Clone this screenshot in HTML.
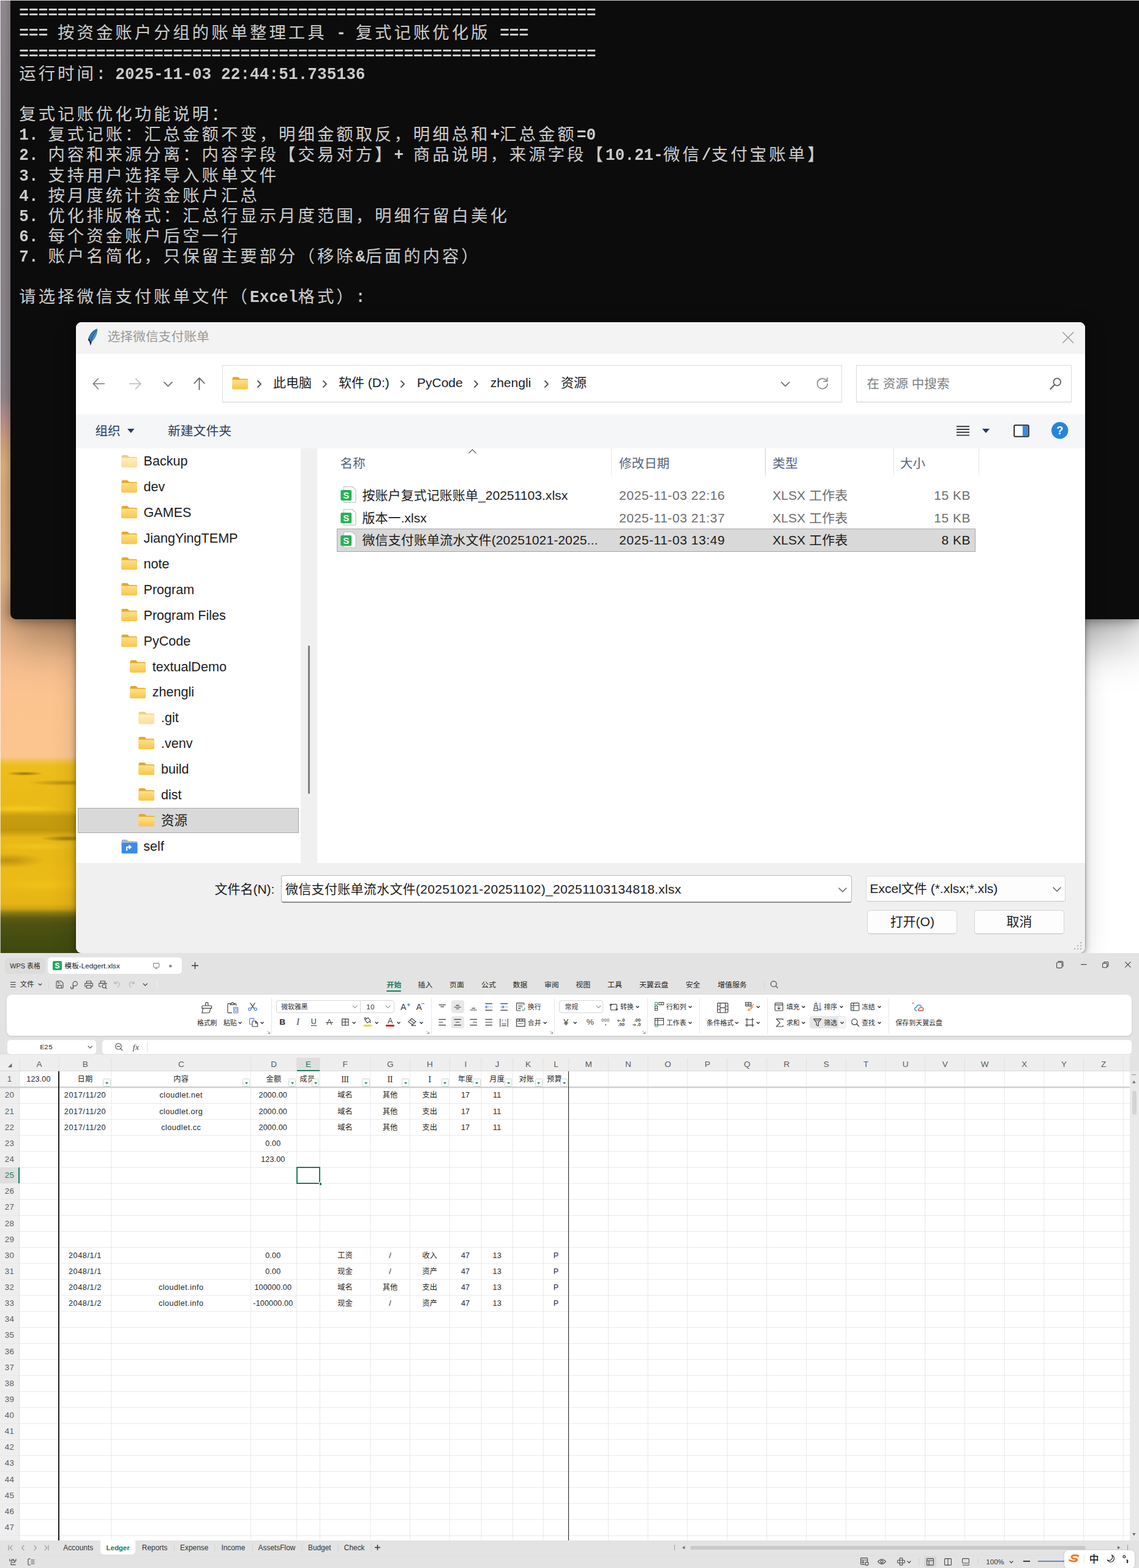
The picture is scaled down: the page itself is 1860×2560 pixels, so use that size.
<!DOCTYPE html>
<html lang="zh-CN"><head><meta charset="utf-8"><title>screenshot</title>
<style>
html,body{margin:0;padding:0;background:#fff;}
body{width:1860px;height:2560px;overflow:hidden;position:relative;font-family:"Liberation Sans","Noto Sans CJK SC",sans-serif;}
#root{position:absolute;left:0;top:0;width:1860px;height:2560px;overflow:hidden;background:#fff;}
.a{position:absolute;}
.t{position:absolute;white-space:pre;line-height:1;}
svg{position:absolute;overflow:visible;}
/* ---------- terminal ---------- */
#wall{background:
 radial-gradient(ellipse 30px 3.5px at 40px 1263px, rgba(110,80,0,.7), rgba(110,80,0,0) 100%),
 radial-gradient(ellipse 60px 5px at 105px 1278px, rgba(120,90,0,.45), rgba(120,90,0,0) 100%),
 radial-gradient(ellipse 70px 7px at 35px 1320px, rgba(255,225,40,.45), rgba(255,225,40,0) 100%),
 radial-gradient(ellipse 45px 5px at 110px 1369px, rgba(100,75,0,.6), rgba(100,75,0,0) 100%),
 radial-gradient(ellipse 60px 12px at 12px 1405px, rgba(120,92,0,.4), rgba(120,92,0,0) 100%),
 radial-gradient(ellipse 80px 7px at 60px 1382px, rgba(255,220,40,.35), rgba(255,220,40,0) 100%),
 radial-gradient(ellipse 80px 10px at 70px 1445px, rgba(255,215,30,.25), rgba(255,215,30,0) 100%),
 linear-gradient(to bottom, rgba(125,95,0,0) 1322px, rgba(125,95,0,.33) 1333px, rgba(125,95,0,.36) 1356px, rgba(125,95,0,0) 1368px),
 linear-gradient(to bottom, #c3bec6 0, #bab4bc 300px, #aca3aa 600px, #b39a9c 660px, #cf9a82 700px, #e6b578 745px, #e3ad78 800px, #e4ae80 900px, #f0b98c 1011px, #f8c190 1080px, #fbc48f 1150px, #fbc590 1235px, #f3c24e 1242px, #edbd1c 1250px, #eaba16 1300px, #e8b816 1400px, #ebbb16 1440px, #e4b416 1476px, #c9a216 1484px, #8c7c14 1490px, #5f5c14 1498px, #4e5212 1508px, #454d10 1530px, #3e480f 1556px);}
#wallR{background:#fff;}
#term{position:absolute;left:17px;top:0;width:1843px;height:1011px;background:#0c0c0c;border-bottom-left-radius:9px;box-shadow:0 0 20px 1px rgba(0,0,0,.45), 0 34px 80px 0 rgba(0,0,0,.36);}
.tl{position:absolute;left:31.3px;height:33.15px;line-height:33.15px;white-space:pre;color:#cccccc;font-family:"Liberation Mono","Noto Sans CJK SC",monospace;font-size:26px;letter-spacing:0.1px;font-weight:bold;}
.tl i{display:inline-block;font-style:normal;transform:scaleY(1.06);transform-origin:0 23.5px;}
.tl b{font-family:"Noto Sans CJK SC","Liberation Mono",monospace;font-weight:400;font-size:27.4px;letter-spacing:4px;line-height:0;position:relative;top:1.1px;}
/* ---------- dialog ---------- */
#dlg{border-radius:9px;box-shadow:0 0 0 1px rgba(0,0,0,.2), 0 2px 10px 1px rgba(0,0,0,.3), 0 10px 40px 0 rgba(0,0,0,.16);background:#f0f0f0;}
#strip{-webkit-mask-image:linear-gradient(to bottom,#000 0,#000 940px,rgba(0,0,0,0) 1003px);mask-image:linear-gradient(to bottom,#000 0,#000 940px,rgba(0,0,0,0) 1003px);background:
 linear-gradient(to right, rgba(0,0,0,0) 0, rgba(0,0,0,0) 7px, rgba(0,0,0,.13) 17px),
 linear-gradient(to bottom, #8e888e 0, #898388 300px, #878086 600px, #8f8185 650px, #b08a86 685px, #c89a76 720px, #d3aa76 760px, #d2a574 800px, #d6aa7a 900px, #dcb084 980px, #deb288 1003px);}

</style></head>
<body>
<div id="root">
<div id="wall" class="a" style="left:0;top:0;width:1860px;height:1556px;"></div>
<div id="wallR" class="a" style="left:1700px;top:1000px;width:160px;height:556px;"></div>
<div id="term"></div>
<div id="strip" class="a" style="left:0;top:0;width:17.3px;height:1003px;"></div>
<div class="a" style="left:0;top:0;width:1860px;height:1.3px;background:rgba(255,255,255,.82);"></div>
<div class="a" style="left:0;top:0;width:1.3px;height:1556px;background:rgba(255,255,255,.7);"></div>
<div class="tl" style="top:6.3px"><i>============================================================</i></div>
<div class="tl" style="top:39.4px"><i>=== </i><b>按资金账户分组的账单整理工具</b><i> - </i><b>复式记账优化版</b><i> ===</i></div>
<div class="tl" style="top:72.6px"><i>============================================================</i></div>
<div class="tl" style="top:105.7px"><b>运行时间</b><i>: 2025-11-03 22:44:51.735136</i></div>
<div class="tl" style="top:172.1px"><b>复式记账优化功能说明：</b></div>
<div class="tl" style="top:205.2px"><i>1. </i><b>复式记账：汇总金额不变，明细金额取反，明细总和</b><i>+</i><b>汇总金额</b><i>=0</i></div>
<div class="tl" style="top:238.3px"><i>2. </i><b>内容和来源分离：内容字段【交易对方】</b><i>+ </i><b>商品说明，来源字段【</b><i>10.21-</i><b>微信</b><i>/</i><b>支付宝账单】</b></div>
<div class="tl" style="top:271.5px"><i>3. </i><b>支持用户选择导入账单文件</b></div>
<div class="tl" style="top:304.6px"><i>4. </i><b>按月度统计资金账户汇总</b></div>
<div class="tl" style="top:337.8px"><i>5. </i><b>优化排版格式：汇总行显示月度范围，明细行留白美化</b></div>
<div class="tl" style="top:370.9px"><i>6. </i><b>每个资金账户后空一行</b></div>
<div class="tl" style="top:404.1px"><i>7. </i><b>账户名简化，只保留主要部分（移除</b><i>&amp;</i><b>后面的内容）</b></div>
<div class="tl" style="top:470.4px"><b>请选择微信支付账单文件（</b><i>Excel</i><b>格式）</b><i>:</i></div>
<svg width="0" height="0" style="left:0;top:0"><defs><linearGradient id="fg" x1="0" y1="0" x2="0" y2="1"><stop offset="0" stop-color="#ffe08a"/><stop offset="1" stop-color="#f7c64a"/></linearGradient></defs></svg>
<div id="dlg" class="a" style="left:124px;top:526px;width:1648px;height:1030px;">
</div>
<div class="a" style="left:124px;top:526px;width:1648px;height:52px;background:#f3f3f3;border-radius:9px 9px 0 0;"></div>
<div class="a" style="left:124px;top:577.5px;width:1648px;height:99px;background:#fff;"></div>
<div class="a" style="left:124px;top:676px;width:1648px;height:56px;background:#f5f6f8;"></div>
<div class="a" style="left:124px;top:732px;width:1648px;height:677px;background:#fff;"></div>
<div class="a" style="left:491px;top:732px;width:27px;height:677px;background:#f0f0f0;"></div>
<div class="a" style="left:124px;top:1408.6px;width:1648px;height:147.4px;background:#f0f0f0;border-radius:0 0 9px 9px;"></div>
<svg style="left:143px;top:536px;" width="17" height="29" viewBox="0 0 17 29"><path d="M15.8 0.6 C9 3 2 11 0.8 19 L3 21.5 L4.8 27.9 L7 22 C12 17 17 9 15.8 0.6 Z" fill="#3f7dbb"/><path d="M0.8 19 L3 21.5 L4.8 27.9 L6.6 22.6 C5 21.6 3.2 19.8 3 16.5 C2 17 1.2 18 0.8 19 Z" fill="#14284a"/><path d="M15.8 0.6 C9 3 2 11 0.8 19 C3 12 8 5.5 15.8 0.6 Z" fill="#244c84"/><path d="M14.4 3.2 C9.5 8.5 6.2 15.5 5 23.5" stroke="#1d3c6c" stroke-width="0.9" fill="none" opacity="0.75"/><path d="M15 4.5 C14.6 9.5 12 15 8.2 19.8 C10.4 14 12.8 9 15 4.5 Z" fill="#6fa9dc" opacity="0.8"/></svg>
<div class="t" style="top:535.3px;font-size:20.8px;line-height:30px;height:30px;color:#999;left:175.5px;">选择微信支付账单</div>
<svg style="left:1735.2px;top:542.2px;" width="18.4" height="18.4" viewBox="0 0 18.4 18.4"><path d="M0.3 0.3 L18.1 18.1 M18.1 0.3 L0.3 18.1" stroke="#9a9a9a" stroke-width="1.5" fill="none"/></svg>
<svg style="left:150.5px;top:616.8px;" width="20" height="19" viewBox="0 0 20 19"><path d="M19.3 9.5 L1.6 9.5 M9.3 1.2 L1.3 9.5 L9.3 17.8" stroke="#757575" stroke-width="1.6" fill="none" stroke-linecap="round" stroke-linejoin="round"/></svg>
<svg style="left:211px;top:616.8px;" width="20" height="19" viewBox="0 0 20 19"><path d="M0.7 9.5 L18.4 9.5 M10.7 1.2 L18.7 9.5 L10.7 17.8" stroke="#b9b9b9" stroke-width="1.6" fill="none" stroke-linecap="round" stroke-linejoin="round"/></svg>
<svg style="left:267.5px;top:623.75px;" width="13" height="6.5" viewBox="0 0 13 6.5"><path d="M0 0 L6.5 6.5 L13 0" fill="none" stroke="#7a7a7a" stroke-width="1.8" stroke-linecap="round" stroke-linejoin="round"/></svg>
<svg style="left:315.5px;top:616px;" width="19" height="21" viewBox="0 0 19 21"><path d="M9.5 20 L9.5 1.5 M1.2 9.8 L9.5 1.2 L17.8 9.8" stroke="#6b6b6b" stroke-width="1.8" fill="none" stroke-linecap="round" stroke-linejoin="round"/></svg>
<div class="a" style="left:363px;top:596px;width:1012.4px;height:61px;box-sizing:border-box;background:#fff;border:1.5px solid #dcdcdc;border-bottom-color:#cfcfcf;"></div>
<div class="a" style="left:1398px;top:596px;width:352px;height:61px;box-sizing:border-box;background:#fff;border:1.5px solid #dcdcdc;border-bottom-color:#cfcfcf;"></div>
<svg style="left:378px;top:613.5px;" width="28" height="23" viewBox="0 0 28 22"><g><path d="M1.5 3.2 Q1.5 1 3.7 1 L10 1 Q11.3 1 12.2 2 L14 4 L25 4 Q27 4 27 6 L27 9 L1.5 9 Z" fill="#e3a926"/><path d="M1 7.6 Q1 5.4 3.2 5.4 L24.8 5.4 Q27 5.4 27 7.6 L27 19 Q27 21.2 24.8 21.2 L3.2 21.2 Q1 21.2 1 19 Z" fill="url(#fg)"/></g></svg>
<div class="t" style="top:610.3px;font-size:21px;line-height:30px;height:30px;color:#1c1c1c;left:446px;">此电脑</div>
<div class="t" style="top:610.3px;font-size:21px;line-height:30px;height:30px;color:#1c1c1c;left:553px;">软件 (D:)</div>
<div class="t" style="top:610.3px;font-size:21px;line-height:30px;height:30px;color:#1c1c1c;left:681px;">PyCode</div>
<div class="t" style="top:610.3px;font-size:21px;line-height:30px;height:30px;color:#1c1c1c;left:800.7px;">zhengli</div>
<div class="t" style="top:610.3px;font-size:21px;line-height:30px;height:30px;color:#1c1c1c;left:916px;">资源</div>
<svg style="left:421.2px;top:621.5px;" width="5" height="10" viewBox="0 0 5 10"><path d="M0 0 L5 5 L0 10" fill="none" stroke="#555" stroke-width="1.9" stroke-linecap="round" stroke-linejoin="round"/></svg>
<svg style="left:527.5px;top:621.5px;" width="5" height="10" viewBox="0 0 5 10"><path d="M0 0 L5 5 L0 10" fill="none" stroke="#555" stroke-width="1.9" stroke-linecap="round" stroke-linejoin="round"/></svg>
<svg style="left:654.5px;top:621.5px;" width="5" height="10" viewBox="0 0 5 10"><path d="M0 0 L5 5 L0 10" fill="none" stroke="#555" stroke-width="1.9" stroke-linecap="round" stroke-linejoin="round"/></svg>
<svg style="left:775px;top:621.5px;" width="5" height="10" viewBox="0 0 5 10"><path d="M0 0 L5 5 L0 10" fill="none" stroke="#555" stroke-width="1.9" stroke-linecap="round" stroke-linejoin="round"/></svg>
<svg style="left:890px;top:621.5px;" width="5" height="10" viewBox="0 0 5 10"><path d="M0 0 L5 5 L0 10" fill="none" stroke="#555" stroke-width="1.9" stroke-linecap="round" stroke-linejoin="round"/></svg>
<svg style="left:1275.5px;top:623.75px;" width="13" height="6.5" viewBox="0 0 13 6.5"><path d="M0 0 L6.5 6.5 L13 0" fill="none" stroke="#7a7a7a" stroke-width="1.8" stroke-linecap="round" stroke-linejoin="round"/></svg>
<svg style="left:1333px;top:616px;" width="20" height="20" viewBox="0 0 20 20"><path d="M17.2 6.2 A8.3 8.3 0 1 0 18.3 10.6" stroke="#8a8a8a" stroke-width="1.7" fill="none" stroke-linecap="round"/><path d="M17.8 0.8 L17.8 6.6 L12 6.6" stroke="#8a8a8a" stroke-width="1.7" fill="none" stroke-linecap="round" stroke-linejoin="round"/></svg>
<div class="t" style="top:611.8px;font-size:20.6px;line-height:30px;height:30px;color:#7d7d7d;left:1415.5px;">在 资源 中搜索</div>
<svg style="left:1714px;top:615.5px;" width="20" height="21" viewBox="0 0 20 21"><circle cx="12.3" cy="7.7" r="5.9" stroke="#666" stroke-width="1.9" fill="none"/><path d="M8 12.2 L1.3 19.3" stroke="#666" stroke-width="2.2" stroke-linecap="round"/></svg>
<div class="t" style="top:688.6px;font-size:20.6px;line-height:30px;height:30px;color:#2a3c5a;left:155.5px;">组织</div>
<svg style="left:208.2px;top:700.2px;" width="11.5" height="7" viewBox="0 0 11.5 7"><path d="M0 0 L11.5 0 L5.75 7 Z" fill="#2a3c5a"/></svg>
<div class="t" style="top:688.6px;font-size:20.8px;line-height:30px;height:30px;color:#2a3c5a;left:274px;">新建文件夹</div>
<svg style="left:1561.5px;top:695px;" width="21" height="17" viewBox="0 0 21 17"><path d="M0 1.2 H21 M0 6 H21 M0 10.8 H21 M0 15.6 H21" stroke="#3a3a3a" stroke-width="1.9"/></svg>
<svg style="left:1603.5px;top:700.2px;" width="12" height="7" viewBox="0 0 12 7"><path d="M0 0 L12 0 L6 7 Z" fill="#233a63"/></svg>
<svg style="left:1655px;top:692.8px;" width="26" height="21" viewBox="0 0 26 21"><rect x="1.2" y="1.2" width="23.6" height="18.6" rx="1.5" fill="#fff" stroke="#2b2b2b" stroke-width="2"/><rect x="15" y="2.2" width="8.8" height="16.6" fill="#3c8ad8"/></svg>
<svg style="left:1716.8px;top:689.3px;" width="27.4" height="27.4" viewBox="0 0 27.4 27.4"><circle cx="13.7" cy="13.7" r="13.7" fill="#2585d9"/><text x="13.7" y="20.3" font-size="18" font-weight="bold" font-family="Liberation Sans, sans-serif" fill="#fff" text-anchor="middle">?</text></svg>
<svg style="left:196.5px;top:741.5px;" width="28" height="22" viewBox="0 0 28 22"><g opacity="0.55"><path d="M1.5 3.2 Q1.5 1 3.7 1 L10 1 Q11.3 1 12.2 2 L14 4 L25 4 Q27 4 27 6 L27 9 L1.5 9 Z" fill="#e3a926"/><path d="M1 7.6 Q1 5.4 3.2 5.4 L24.8 5.4 Q27 5.4 27 7.6 L27 19 Q27 21.2 24.8 21.2 L3.2 21.2 Q1 21.2 1 19 Z" fill="url(#fg)"/></g></svg>
<div class="t" style="top:738.3px;font-size:21.6px;line-height:30px;height:30px;color:#1c1c1c;left:234.5px;">Backup</div>
<svg style="left:196.5px;top:783.4px;" width="28" height="22" viewBox="0 0 28 22"><g><path d="M1.5 3.2 Q1.5 1 3.7 1 L10 1 Q11.3 1 12.2 2 L14 4 L25 4 Q27 4 27 6 L27 9 L1.5 9 Z" fill="#e3a926"/><path d="M1 7.6 Q1 5.4 3.2 5.4 L24.8 5.4 Q27 5.4 27 7.6 L27 19 Q27 21.2 24.8 21.2 L3.2 21.2 Q1 21.2 1 19 Z" fill="url(#fg)"/></g></svg>
<div class="t" style="top:780.2px;font-size:21.6px;line-height:30px;height:30px;color:#1c1c1c;left:234.5px;">dev</div>
<svg style="left:196.5px;top:825.3px;" width="28" height="22" viewBox="0 0 28 22"><g><path d="M1.5 3.2 Q1.5 1 3.7 1 L10 1 Q11.3 1 12.2 2 L14 4 L25 4 Q27 4 27 6 L27 9 L1.5 9 Z" fill="#e3a926"/><path d="M1 7.6 Q1 5.4 3.2 5.4 L24.8 5.4 Q27 5.4 27 7.6 L27 19 Q27 21.2 24.8 21.2 L3.2 21.2 Q1 21.2 1 19 Z" fill="url(#fg)"/></g></svg>
<div class="t" style="top:822.1px;font-size:21.6px;line-height:30px;height:30px;color:#1c1c1c;left:234.5px;">GAMES</div>
<svg style="left:196.5px;top:867.2px;" width="28" height="22" viewBox="0 0 28 22"><g><path d="M1.5 3.2 Q1.5 1 3.7 1 L10 1 Q11.3 1 12.2 2 L14 4 L25 4 Q27 4 27 6 L27 9 L1.5 9 Z" fill="#e3a926"/><path d="M1 7.6 Q1 5.4 3.2 5.4 L24.8 5.4 Q27 5.4 27 7.6 L27 19 Q27 21.2 24.8 21.2 L3.2 21.2 Q1 21.2 1 19 Z" fill="url(#fg)"/></g></svg>
<div class="t" style="top:864px;font-size:21.6px;line-height:30px;height:30px;color:#1c1c1c;left:234.5px;">JiangYingTEMP</div>
<svg style="left:196.5px;top:909.1px;" width="28" height="22" viewBox="0 0 28 22"><g><path d="M1.5 3.2 Q1.5 1 3.7 1 L10 1 Q11.3 1 12.2 2 L14 4 L25 4 Q27 4 27 6 L27 9 L1.5 9 Z" fill="#e3a926"/><path d="M1 7.6 Q1 5.4 3.2 5.4 L24.8 5.4 Q27 5.4 27 7.6 L27 19 Q27 21.2 24.8 21.2 L3.2 21.2 Q1 21.2 1 19 Z" fill="url(#fg)"/></g></svg>
<div class="t" style="top:905.9px;font-size:21.6px;line-height:30px;height:30px;color:#1c1c1c;left:234.5px;">note</div>
<svg style="left:196.5px;top:951px;" width="28" height="22" viewBox="0 0 28 22"><g><path d="M1.5 3.2 Q1.5 1 3.7 1 L10 1 Q11.3 1 12.2 2 L14 4 L25 4 Q27 4 27 6 L27 9 L1.5 9 Z" fill="#e3a926"/><path d="M1 7.6 Q1 5.4 3.2 5.4 L24.8 5.4 Q27 5.4 27 7.6 L27 19 Q27 21.2 24.8 21.2 L3.2 21.2 Q1 21.2 1 19 Z" fill="url(#fg)"/></g></svg>
<div class="t" style="top:947.8px;font-size:21.6px;line-height:30px;height:30px;color:#1c1c1c;left:234.5px;">Program</div>
<svg style="left:196.5px;top:992.9px;" width="28" height="22" viewBox="0 0 28 22"><g><path d="M1.5 3.2 Q1.5 1 3.7 1 L10 1 Q11.3 1 12.2 2 L14 4 L25 4 Q27 4 27 6 L27 9 L1.5 9 Z" fill="#e3a926"/><path d="M1 7.6 Q1 5.4 3.2 5.4 L24.8 5.4 Q27 5.4 27 7.6 L27 19 Q27 21.2 24.8 21.2 L3.2 21.2 Q1 21.2 1 19 Z" fill="url(#fg)"/></g></svg>
<div class="t" style="top:989.7px;font-size:21.6px;line-height:30px;height:30px;color:#1c1c1c;left:234.5px;">Program Files</div>
<svg style="left:196.5px;top:1034.8px;" width="28" height="22" viewBox="0 0 28 22"><g><path d="M1.5 3.2 Q1.5 1 3.7 1 L10 1 Q11.3 1 12.2 2 L14 4 L25 4 Q27 4 27 6 L27 9 L1.5 9 Z" fill="#e3a926"/><path d="M1 7.6 Q1 5.4 3.2 5.4 L24.8 5.4 Q27 5.4 27 7.6 L27 19 Q27 21.2 24.8 21.2 L3.2 21.2 Q1 21.2 1 19 Z" fill="url(#fg)"/></g></svg>
<div class="t" style="top:1031.6px;font-size:21.6px;line-height:30px;height:30px;color:#1c1c1c;left:234.5px;">PyCode</div>
<svg style="left:210.7px;top:1076.7px;" width="28" height="22" viewBox="0 0 28 22"><g><path d="M1.5 3.2 Q1.5 1 3.7 1 L10 1 Q11.3 1 12.2 2 L14 4 L25 4 Q27 4 27 6 L27 9 L1.5 9 Z" fill="#e3a926"/><path d="M1 7.6 Q1 5.4 3.2 5.4 L24.8 5.4 Q27 5.4 27 7.6 L27 19 Q27 21.2 24.8 21.2 L3.2 21.2 Q1 21.2 1 19 Z" fill="url(#fg)"/></g></svg>
<div class="t" style="top:1073.5px;font-size:21.6px;line-height:30px;height:30px;color:#1c1c1c;left:248.7px;">textualDemo</div>
<svg style="left:210.7px;top:1118.6px;" width="28" height="22" viewBox="0 0 28 22"><g><path d="M1.5 3.2 Q1.5 1 3.7 1 L10 1 Q11.3 1 12.2 2 L14 4 L25 4 Q27 4 27 6 L27 9 L1.5 9 Z" fill="#e3a926"/><path d="M1 7.6 Q1 5.4 3.2 5.4 L24.8 5.4 Q27 5.4 27 7.6 L27 19 Q27 21.2 24.8 21.2 L3.2 21.2 Q1 21.2 1 19 Z" fill="url(#fg)"/></g></svg>
<div class="t" style="top:1115.4px;font-size:21.6px;line-height:30px;height:30px;color:#1c1c1c;left:248.7px;">zhengli</div>
<svg style="left:224.9px;top:1160.5px;" width="28" height="22" viewBox="0 0 28 22"><g opacity="0.55"><path d="M1.5 3.2 Q1.5 1 3.7 1 L10 1 Q11.3 1 12.2 2 L14 4 L25 4 Q27 4 27 6 L27 9 L1.5 9 Z" fill="#e3a926"/><path d="M1 7.6 Q1 5.4 3.2 5.4 L24.8 5.4 Q27 5.4 27 7.6 L27 19 Q27 21.2 24.8 21.2 L3.2 21.2 Q1 21.2 1 19 Z" fill="url(#fg)"/></g></svg>
<div class="t" style="top:1157.3px;font-size:21.6px;line-height:30px;height:30px;color:#1c1c1c;left:262.9px;">.git</div>
<svg style="left:224.9px;top:1202.4px;" width="28" height="22" viewBox="0 0 28 22"><g><path d="M1.5 3.2 Q1.5 1 3.7 1 L10 1 Q11.3 1 12.2 2 L14 4 L25 4 Q27 4 27 6 L27 9 L1.5 9 Z" fill="#e3a926"/><path d="M1 7.6 Q1 5.4 3.2 5.4 L24.8 5.4 Q27 5.4 27 7.6 L27 19 Q27 21.2 24.8 21.2 L3.2 21.2 Q1 21.2 1 19 Z" fill="url(#fg)"/></g></svg>
<div class="t" style="top:1199.2px;font-size:21.6px;line-height:30px;height:30px;color:#1c1c1c;left:262.9px;">.venv</div>
<svg style="left:224.9px;top:1244.3px;" width="28" height="22" viewBox="0 0 28 22"><g><path d="M1.5 3.2 Q1.5 1 3.7 1 L10 1 Q11.3 1 12.2 2 L14 4 L25 4 Q27 4 27 6 L27 9 L1.5 9 Z" fill="#e3a926"/><path d="M1 7.6 Q1 5.4 3.2 5.4 L24.8 5.4 Q27 5.4 27 7.6 L27 19 Q27 21.2 24.8 21.2 L3.2 21.2 Q1 21.2 1 19 Z" fill="url(#fg)"/></g></svg>
<div class="t" style="top:1241.1px;font-size:21.6px;line-height:30px;height:30px;color:#1c1c1c;left:262.9px;">build</div>
<svg style="left:224.9px;top:1286.2px;" width="28" height="22" viewBox="0 0 28 22"><g><path d="M1.5 3.2 Q1.5 1 3.7 1 L10 1 Q11.3 1 12.2 2 L14 4 L25 4 Q27 4 27 6 L27 9 L1.5 9 Z" fill="#e3a926"/><path d="M1 7.6 Q1 5.4 3.2 5.4 L24.8 5.4 Q27 5.4 27 7.6 L27 19 Q27 21.2 24.8 21.2 L3.2 21.2 Q1 21.2 1 19 Z" fill="url(#fg)"/></g></svg>
<div class="t" style="top:1283px;font-size:21.6px;line-height:30px;height:30px;color:#1c1c1c;left:262.9px;">dist</div>
<div class="a" style="left:127.2px;top:1319.2px;width:361.2px;height:40.8px;box-sizing:border-box;background:#d9d9d9;border:1.3px solid #a9a9a9;"></div>
<svg style="left:224.9px;top:1328.1px;" width="28" height="22" viewBox="0 0 28 22"><g><path d="M1.5 3.2 Q1.5 1 3.7 1 L10 1 Q11.3 1 12.2 2 L14 4 L25 4 Q27 4 27 6 L27 9 L1.5 9 Z" fill="#e3a926"/><path d="M1 7.6 Q1 5.4 3.2 5.4 L24.8 5.4 Q27 5.4 27 7.6 L27 19 Q27 21.2 24.8 21.2 L3.2 21.2 Q1 21.2 1 19 Z" fill="url(#fg)"/></g></svg>
<div class="t" style="top:1324.9px;font-size:21.6px;line-height:30px;height:30px;color:#1c1c1c;left:262.9px;">资源</div>
<svg style="left:197.5px;top:1369.5px;" width="27" height="24" viewBox="0 0 27 24"><path d="M0.5 3 Q0.5 0.8 2.7 0.8 L9 0.8 L11.5 3.6 L24.3 3.6 Q26.5 3.6 26.5 5.8 L26.5 8 L0.5 8 Z" fill="#9fb4d8"/><rect x="0.5" y="6" width="26" height="17.5" rx="2" fill="#3b8bea"/><path d="M9 19 L9 13 L15.5 13 M12.3 10 L15.8 13 L12.3 16" stroke="#fff" stroke-width="2" fill="none"/></svg>
<div class="t" style="top:1366.8px;font-size:21.6px;line-height:30px;height:30px;color:#1c1c1c;left:234.3px;">self</div>
<div class="a" style="left:503.2px;top:1053.6px;width:2.4px;height:242.6px;background:#7f7f7f;border-radius:1.2px;"></div>
<div class="t" style="top:741.6px;font-size:20.6px;line-height:30px;height:30px;color:#55657e;left:555.4px;">名称</div>
<div class="t" style="top:741.6px;font-size:20.6px;line-height:30px;height:30px;color:#55657e;left:1011px;">修改日期</div>
<div class="t" style="top:741.6px;font-size:20.6px;line-height:30px;height:30px;color:#55657e;left:1261.6px;">类型</div>
<div class="t" style="top:741.6px;font-size:20.6px;line-height:30px;height:30px;color:#55657e;left:1470px;">大小</div>
<svg style="left:766.3px;top:734.45px;" width="11" height="5.5" viewBox="0 0 11 5.5"><path d="M0 5.5 L5.5 0 L11 5.5" fill="none" stroke="#777" stroke-width="1.6" stroke-linecap="round" stroke-linejoin="round"/></svg>
<div class="a" style="left:998.2px;top:732px;width:1.2px;height:49px;background:linear-gradient(to bottom,#e4e4e4 0,#e4e4e4 80%,rgba(228,228,228,0));"></div>
<div class="a" style="left:1249.4px;top:732px;width:1.2px;height:49px;background:linear-gradient(to bottom,#e4e4e4 0,#e4e4e4 80%,rgba(228,228,228,0));"></div>
<div class="a" style="left:1459.1px;top:732px;width:1.2px;height:49px;background:linear-gradient(to bottom,#e4e4e4 0,#e4e4e4 80%,rgba(228,228,228,0));"></div>
<div class="a" style="left:1597.8px;top:732px;width:1.2px;height:49px;background:linear-gradient(to bottom,#e4e4e4 0,#e4e4e4 80%,rgba(228,228,228,0));"></div>
<svg style="left:555.8px;top:794px;" width="26" height="27" viewBox="0 0 26 27"><path d="M5.5 0.7 L19.5 0.7 L25 6 L25 24 Q25 26.3 22.7 26.3 L5.5 26.3 Z" fill="#fff" stroke="#c4c4c4" stroke-width="1.2"/><rect x="0.3" y="6" width="17.8" height="17.2" rx="2.2" fill="#22b455"/><text x="9.2" y="20" font-size="15" font-weight="bold" font-family="Liberation Sans, sans-serif" fill="#fff" text-anchor="middle">S</text></svg>
<div class="t" style="top:793.8px;font-size:21px;line-height:30px;height:30px;color:#1c1c1c;left:591.5px;letter-spacing:0.05px;">按账户复式记账账单_20251103.xlsx</div>
<div class="t" style="top:793.8px;font-size:21px;line-height:30px;height:30px;color:#6d6d6d;left:1011px;letter-spacing:0.55px;">2025-11-03 22:16</div>
<div class="t" style="top:793.8px;font-size:21px;line-height:30px;height:30px;color:#6d6d6d;left:1261.6px;">XLSX 工作表</div>
<div class="t" style="top:793.8px;font-size:21px;line-height:30px;height:30px;color:#6d6d6d;left:1465px;width:120px;text-align:right;letter-spacing:0.5px;">15 KB</div>
<svg style="left:555.8px;top:830.7px;" width="26" height="27" viewBox="0 0 26 27"><path d="M5.5 0.7 L19.5 0.7 L25 6 L25 24 Q25 26.3 22.7 26.3 L5.5 26.3 Z" fill="#fff" stroke="#c4c4c4" stroke-width="1.2"/><rect x="0.3" y="6" width="17.8" height="17.2" rx="2.2" fill="#22b455"/><text x="9.2" y="20" font-size="15" font-weight="bold" font-family="Liberation Sans, sans-serif" fill="#fff" text-anchor="middle">S</text></svg>
<div class="t" style="top:830.5px;font-size:21px;line-height:30px;height:30px;color:#1c1c1c;left:591.5px;letter-spacing:0.05px;">版本一.xlsx</div>
<div class="t" style="top:830.5px;font-size:21px;line-height:30px;height:30px;color:#6d6d6d;left:1011px;letter-spacing:0.55px;">2025-11-03 21:37</div>
<div class="t" style="top:830.5px;font-size:21px;line-height:30px;height:30px;color:#6d6d6d;left:1261.6px;">XLSX 工作表</div>
<div class="t" style="top:830.5px;font-size:21px;line-height:30px;height:30px;color:#6d6d6d;left:1465px;width:120px;text-align:right;letter-spacing:0.5px;">15 KB</div>
<div class="a" style="left:549.5px;top:863.4px;width:1043.5px;height:37.8px;box-sizing:border-box;background:#d9d9d9;border:1.3px solid #a6a6a6;"></div>
<svg style="left:555.8px;top:867.6px;" width="26" height="27" viewBox="0 0 26 27"><path d="M5.5 0.7 L19.5 0.7 L25 6 L25 24 Q25 26.3 22.7 26.3 L5.5 26.3 Z" fill="#fff" stroke="#c4c4c4" stroke-width="1.2"/><rect x="0.3" y="6" width="17.8" height="17.2" rx="2.2" fill="#22b455"/><text x="9.2" y="20" font-size="15" font-weight="bold" font-family="Liberation Sans, sans-serif" fill="#fff" text-anchor="middle">S</text></svg>
<div class="t" style="top:867.4px;font-size:21px;line-height:30px;height:30px;color:#1c1c1c;left:591.5px;letter-spacing:0.12px;">微信支付账单流水文件(20251021-2025...</div>
<div class="t" style="top:867.4px;font-size:21px;line-height:30px;height:30px;color:#1c1c1c;left:1011px;letter-spacing:0.55px;">2025-11-03 13:49</div>
<div class="t" style="top:867.4px;font-size:21px;line-height:30px;height:30px;color:#1c1c1c;left:1261.6px;">XLSX 工作表</div>
<div class="t" style="top:867.4px;font-size:21px;line-height:30px;height:30px;color:#1c1c1c;left:1465px;width:120px;text-align:right;letter-spacing:0.5px;">8 KB</div>
<div class="t" style="top:1437.3px;font-size:21px;line-height:30px;height:30px;color:#1c1c1c;left:350.4px;">文件名(N):</div>
<div class="a" style="left:458.5px;top:1429px;width:932.5px;height:44.5px;box-sizing:border-box;background:#fff;border:1.5px solid #b9b9b9;border-bottom:2px solid #8c8c8c;border-radius:4px;"></div>
<div class="t" style="top:1437.3px;font-size:21px;line-height:30px;height:30px;color:#1c1c1c;left:466px;letter-spacing:0.3px;">微信支付账单流水文件(20251021-20251102)_20251103134818.xlsx</div>
<svg style="left:1369.5px;top:1449.6px;" width="12" height="6" viewBox="0 0 12 6"><path d="M0 0 L6 6 L12 0" fill="none" stroke="#666" stroke-width="1.6" stroke-linecap="round" stroke-linejoin="round"/></svg>
<div class="a" style="left:1413.8px;top:1430px;width:326.4px;height:41.5px;box-sizing:border-box;background:#fdfdfd;border:1.3px solid #d9d9d9;border-bottom-color:#c4c4c4;border-radius:4px;"></div>
<div class="t" style="top:1436.2px;font-size:21px;line-height:30px;height:30px;color:#1c1c1c;left:1420.5px;">Excel文件 (*.xlsx;*.xls)</div>
<svg style="left:1719.5px;top:1448.6px;" width="12" height="6" viewBox="0 0 12 6"><path d="M0 0 L6 6 L12 0" fill="none" stroke="#666" stroke-width="1.6" stroke-linecap="round" stroke-linejoin="round"/></svg>
<div class="a" style="left:1416.2px;top:1486px;width:147.2px;height:38.6px;box-sizing:border-box;background:#fdfdfd;border:1.3px solid #d6d6d6;border-bottom-color:#bdbdbd;border-radius:5px;"></div>
<div class="t" style="top:1490.2px;font-size:21px;line-height:30px;height:30px;color:#1c1c1c;left:1419.8px;width:140px;text-align:center;">打开(O)</div>
<div class="a" style="left:1590.5px;top:1486px;width:147.8px;height:38.6px;box-sizing:border-box;background:#fdfdfd;border:1.3px solid #d6d6d6;border-bottom-color:#bdbdbd;border-radius:5px;"></div>
<div class="t" style="top:1490.2px;font-size:21px;line-height:30px;height:30px;color:#1c1c1c;left:1594.4px;width:140px;text-align:center;">取消</div>
<svg style="left:1754px;top:1537.5px;" width="13" height="13" viewBox="0 0 13 13"><rect x="10" y="0" width="2.2" height="2.2" fill="#b5b5b5"/><rect x="5" y="5" width="2.2" height="2.2" fill="#b5b5b5"/><rect x="10" y="5" width="2.2" height="2.2" fill="#b5b5b5"/><rect x="0" y="10" width="2.2" height="2.2" fill="#b5b5b5"/><rect x="5" y="10" width="2.2" height="2.2" fill="#b5b5b5"/><rect x="10" y="10" width="2.2" height="2.2" fill="#b5b5b5"/></svg>
<div id="wps" class="a" style="left:0;top:1556px;width:1860px;height:1004px;background:#e3e3e3;"></div>
<div class="a" style="left:8px;top:1563.6px;width:66px;height:26px;background:#dcdcdc;border-radius:6px;"></div>
<div class="t" style="top:1567.7px;font-size:10.9px;line-height:18px;height:18px;color:#2b2b2b;left:8px;width:66px;text-align:center;">WPS 表格</div>
<div class="a" style="left:78.4px;top:1563.2px;width:218.2px;height:26.4px;background:#fff;border-radius:6px;"></div>
<svg style="left:85.6px;top:1569.3px;" width="15" height="15" viewBox="0 0 15 15"><rect x="0" y="0" width="15" height="15" rx="2.2" fill="#1eaa61"/><text x="7.5" y="12" font-size="12" font-weight="bold" font-family="Liberation Sans, sans-serif" fill="#fff" text-anchor="middle">S</text></svg>
<div class="t" style="top:1567.7px;font-size:11.6px;line-height:18px;height:18px;color:#222;left:105.5px;letter-spacing:0.05px;">模板-Ledgert.xlsx</div>
<svg style="left:250.2px;top:1571.8px;" width="10.5" height="10" viewBox="0 0 10.5 10"><rect x="0.6" y="0.6" width="9.3" height="6.6" rx="1.2" fill="none" stroke="#8a8a8a" stroke-width="1.1"/><path d="M3.2 9.4 H7.3 M5.25 7.4 V9.4" stroke="#8a8a8a" stroke-width="1.1"/></svg>
<svg style="left:276px;top:1574.5px;" width="4.6" height="4.6" viewBox="0 0 4.6 4.6"><circle cx="2.3" cy="2.3" r="2.3" fill="#8a8a8a"/></svg>
<svg style="left:312.5px;top:1571px;" width="11" height="11" viewBox="0 0 11 11"><path d="M5.5 0 V11 M0 5.5 H11" stroke="#333" stroke-width="1.3"/></svg>
<svg style="left:1725px;top:1569.2px;" width="11.5" height="12" viewBox="0 0 11.5 12"><rect x="0.6" y="2.2" width="8.6" height="9.2" rx="1.6" fill="none" stroke="#444" stroke-width="1.1"/><path d="M2.6 0.6 H9 Q10.9 0.6 10.9 2.5 V9.6" fill="none" stroke="#444" stroke-width="1.1"/></svg>
<svg style="left:1764.5px;top:1574.4px;" width="9.5" height="1.2" viewBox="0 0 9.5 1.2"><rect width="9.5" height="1.2" fill="#444"/></svg>
<svg style="left:1800.3px;top:1570px;" width="10.4" height="10.4" viewBox="0 0 10.4 10.4"><rect x="0.55" y="2.6" width="7.2" height="7.2" rx="1" fill="none" stroke="#444" stroke-width="1.1"/><path d="M2.8 2.4 V1.6 Q2.8 0.55 3.8 0.55 H8.8 Q9.85 0.55 9.85 1.6 V6.6 Q9.85 7.6 8.8 7.6 H8" fill="none" stroke="#444" stroke-width="1.1"/></svg>
<svg style="left:1836.6px;top:1570.2px;" width="9.8" height="9.8" viewBox="0 0 9.8 9.8"><path d="M0.4 0.4 L9.4 9.4 M9.4 0.4 L0.4 9.4" stroke="#444" stroke-width="1.15"/></svg>
<svg style="left:17.3px;top:1602.9px;" width="8.6" height="9" viewBox="0 0 8.6 9"><path d="M0 0.8 H8.6 M0 4.5 H8.6 M0 8.2 H8.6" fill="none" stroke="#333" stroke-width="1.1" /></svg>
<div class="t" style="top:1599.4px;font-size:11.4px;line-height:16px;height:16px;color:#222;left:32.8px;">文件</div>
<svg style="left:62.5px;top:1606.45px;" width="5" height="2.5" viewBox="0 0 5 2.5"><path d="M0 0 L2.5 2.5 L5 0" fill="none" stroke="#444" stroke-width="1.1" stroke-linecap="round" stroke-linejoin="round"/></svg>
<div class="a" style="left:79px;top:1600.5px;width:1px;height:14px;background:#d9d9d9;"></div>
<svg style="left:91.3px;top:1600.9px;" width="13" height="13" viewBox="0 0 13 13"><path d="M1 2.2 Q1 0.8 2.4 0.8 H8.6 L12 4.2 V10.8 Q12 12.2 10.6 12.2 H2.4 Q1 12.2 1 10.8 Z M3.6 12 V7.6 H9.4 V12 M3.8 1 V4 H7.6" fill="none" stroke="#4a4a4a" stroke-width="1.1" /></svg>
<svg style="left:114.7px;top:1600.9px;" width="13" height="13" viewBox="0 0 13 13"><path d="M4.2 12 V5.2 M4.2 5.2 A3.6 3.6 0 1 1 8 8.6 H4.4 M1.2 9.6 A2.2 2.2 0 1 0 4.2 9.6" fill="none" stroke="#4a4a4a" stroke-width="1.1" /></svg>
<svg style="left:137.6px;top:1600.9px;" width="14" height="13" viewBox="0 0 14 13"><path d="M3.4 4.4 V0.8 H10.6 V4.4 M3.4 9.8 H1.6 Q0.7 9.8 0.7 8.9 V5.3 Q0.7 4.4 1.6 4.4 H12.4 Q13.3 4.4 13.3 5.3 V8.9 Q13.3 9.8 12.4 9.8 H10.6 M3.4 7.6 H10.6 V12.2 H3.4 Z" fill="none" stroke="#4a4a4a" stroke-width="1.1" /></svg>
<svg style="left:160.75px;top:1600.65px;" width="14.5" height="13.5" viewBox="0 0 14.5 13.5"><path d="M3.2 4.4 V0.8 H10.4 V4.4 M4 9.8 H1.6 Q0.7 9.8 0.7 8.9 V5.3 Q0.7 4.4 1.6 4.4 H12.2 Q13.1 4.4 13.1 5.3 V6" fill="none" stroke="#4a4a4a" stroke-width="1.1" /><circle cx="9" cy="9" r="3" fill="none" stroke="#4a4a4a" stroke-width="1.1"/><path d="M11.2 11.2 L13.6 13.4" fill="none" stroke="#4a4a4a" stroke-width="1.2" /></svg>
<svg style="left:185.5px;top:1601.4px;" width="10" height="12" viewBox="0 0 10 12"><path d="M1 1 V5 H5 M1.4 4.8 Q5 0.6 8 3.4 Q10.4 6.4 6 11.4" fill="none" stroke="#b4b4b4" stroke-width="1.1" /></svg>
<svg style="left:209.5px;top:1601.4px;" width="10" height="12" viewBox="0 0 10 12"><path d="M9 1 V5 H5 M8.6 4.8 Q5 0.6 2 3.4 Q-0.4 6.4 4 11.4" fill="none" stroke="#b4b4b4" stroke-width="1.1" /></svg>
<svg style="left:234.4px;top:1606.2px;" width="6.4" height="3.2" viewBox="0 0 6.4 3.2"><path d="M0 0 L3.2 3.2 L6.4 0" fill="none" stroke="#444" stroke-width="1.2" stroke-linecap="round" stroke-linejoin="round"/></svg>
<div class="a" style="left:256.4px;top:1600.5px;width:1px;height:14px;background:#efefef;"></div>
<div class="t" style="top:1599.6px;font-size:11.9px;line-height:16px;height:16px;color:#1f7a5c;left:603.4px;width:80px;text-align:center;font-weight:bold;">开始</div>
<div class="a" style="left:631.4px;top:1617.3px;width:24px;height:2px;background:#1f7a5c;border-radius:1px;"></div>
<div class="t" style="top:1599.6px;font-size:11.9px;line-height:16px;height:16px;color:#222;left:654.4px;width:80px;text-align:center;">插入</div>
<div class="t" style="top:1599.6px;font-size:11.9px;line-height:16px;height:16px;color:#222;left:706px;width:80px;text-align:center;">页面</div>
<div class="t" style="top:1599.6px;font-size:11.9px;line-height:16px;height:16px;color:#222;left:758px;width:80px;text-align:center;">公式</div>
<div class="t" style="top:1599.6px;font-size:11.9px;line-height:16px;height:16px;color:#222;left:809.3px;width:80px;text-align:center;">数据</div>
<div class="t" style="top:1599.6px;font-size:11.9px;line-height:16px;height:16px;color:#222;left:860.8px;width:80px;text-align:center;">审阅</div>
<div class="t" style="top:1599.6px;font-size:11.9px;line-height:16px;height:16px;color:#222;left:912.2px;width:80px;text-align:center;">视图</div>
<div class="t" style="top:1599.6px;font-size:11.9px;line-height:16px;height:16px;color:#222;left:964px;width:80px;text-align:center;">工具</div>
<div class="t" style="top:1599.6px;font-size:11.9px;line-height:16px;height:16px;color:#222;left:1027.7px;width:80px;text-align:center;">天翼云盘</div>
<div class="t" style="top:1599.6px;font-size:11.9px;line-height:16px;height:16px;color:#222;left:1091.6px;width:80px;text-align:center;">安全</div>
<div class="t" style="top:1599.6px;font-size:11.9px;line-height:16px;height:16px;color:#222;left:1155.7px;width:80px;text-align:center;">增值服务</div>
<div class="a" style="left:1248.2px;top:1600.5px;width:1px;height:14px;background:#d6d6d6;"></div>
<svg style="left:1257.9px;top:1600.9px;" width="13" height="13" viewBox="0 0 13 13"><circle cx="5.4" cy="5.4" r="4.6" fill="none" stroke="#444" stroke-width="1.15"/><path d="M8.8 8.8 L12.4 12.4" fill="none" stroke="#444" stroke-width="1.2" /></svg>
<div class="a" style="left:11.4px;top:1623.7px;width:1837.1px;height:67.3px;background:#fff;border-radius:8px;box-shadow:0 1px 3px rgba(0,0,0,.13);"></div>
<svg style="left:328.85px;top:1635.9px;" width="17.5" height="18.6" viewBox="0 0 17.5 18.6"><path d="M6.6 6 V2.6 Q6.6 0.6 8.7 0.6 Q10.8 0.6 10.8 2.6 V6 M2.2 6 H15.3 Q16.6 6 16.6 7.3 V10.2 H0.9 V7.3 Q0.9 6 2.2 6 Z M2.6 10.4 L0.9 17.8 H11 Q13.8 17.4 13.6 14.4 M13.6 14.6 L14.8 10.4" fill="none" stroke="#3d3d3d" stroke-width="1.15" /></svg>
<div class="t" style="top:1661.6px;font-size:10.85px;line-height:16px;height:16px;color:#2b2b2b;left:321.9px;">格式刷</div>
<svg style="left:370.5px;top:1635.7px;" width="18.6" height="18.6" viewBox="0 0 18.6 18.6"><path d="M5.2 2.6 H2 Q0.8 2.6 0.8 3.8 V16.4 Q0.8 17.6 2 17.6 H8 M5.4 4.4 V2.4 H7 Q7.2 0.6 8.6 0.6 Q10 0.6 10.2 2.4 H11.8 V4.4 Z M12 2.6 H13.4 Q14.6 2.6 14.6 3.8 V6" fill="none" stroke="#3d3d3d" stroke-width="1.15" /><path d="M10.6 8.6 H17.6 V17.8 H10.6 Z M12.6 10.4 H15.8 V15.8 H12.6 Z" fill="none" stroke="#5a78c8" stroke-width="1" /></svg>
<div class="t" style="top:1661.6px;font-size:10.85px;line-height:16px;height:16px;color:#2b2b2b;left:364.8px;">粘贴</div>
<svg style="left:389.5px;top:1668.85px;" width="4.2" height="2.1" viewBox="0 0 4.2 2.1"><path d="M0 0 L2.1 2.1 L4.2 0" fill="none" stroke="#2b2b2b" stroke-width="1.35" stroke-linecap="round" stroke-linejoin="round"/></svg>
<svg style="left:405.1px;top:1636.7px;" width="15" height="13.4" viewBox="0 0 15 13.4"><path d="M3.6 0.4 L10 9.6 M11.4 0.4 L5 9.6" fill="none" stroke="#3d3d3d" stroke-width="1.15" /><circle cx="2.7" cy="10.6" r="2.1" fill="none" stroke="#4a74d9" stroke-width="1.1"/><circle cx="12.3" cy="10.6" r="2.1" fill="none" stroke="#4a74d9" stroke-width="1.1"/></svg>
<svg style="left:406.8px;top:1661.9px;" width="14.6" height="14.6" viewBox="0 0 14.6 14.6"><path d="M4.4 10.2 H1.6 Q0.6 10.2 0.6 9.2 V1.6 Q0.6 0.6 1.6 0.6 H6.6 Q7.6 0.6 7.6 1.6 V3.4" fill="none" stroke="#5a78c8" stroke-width="1.1" /><path d="M6 5 H10.6 L13.8 8.2 V13 Q13.8 14 12.8 14 H6 Q5 14 5 13 V6 Q5 5 6 5 Z M10.4 5.2 V8.4 H13.6" fill="none" stroke="#3d3d3d" stroke-width="1.1" /></svg>
<svg style="left:425.9px;top:1668.85px;" width="4.2" height="2.1" viewBox="0 0 4.2 2.1"><path d="M0 0 L2.1 2.1 L4.2 0" fill="none" stroke="#2b2b2b" stroke-width="1.35" stroke-linecap="round" stroke-linejoin="round"/></svg>
<svg style="left:435.8px;top:1683.2px;" width="5" height="5" viewBox="0 0 5 5"><path d="M0.4 0.4 L4.4 4.4 M4.6 1.4 V4.6 H1.4" fill="none" stroke="#8c8c8c" stroke-width="0.9" /></svg>
<div class="a" style="left:443px;top:1630px;width:1px;height:57.5px;background:#e6e6e6;"></div>
<div class="a" style="left:450.5px;top:1633.3px;width:193px;height:21px;box-sizing:border-box;border:1px solid #d6d6d6;border-radius:4px;background:#fff;"></div>
<div class="a" style="left:588.2px;top:1633.8px;width:1px;height:20px;background:#d6d6d6;"></div>
<div class="t" style="top:1636px;font-size:10.9px;line-height:16px;height:16px;color:#333;left:459.2px;">微软雅黑</div>
<svg style="left:576.3px;top:1642.45px;" width="7" height="3.5" viewBox="0 0 7 3.5"><path d="M0 0 L3.5 3.5 L7 0" fill="none" stroke="#777" stroke-width="1.05" stroke-linecap="round" stroke-linejoin="round"/></svg>
<div class="t" style="top:1636.1px;font-size:11.6px;line-height:16px;height:16px;color:#333;left:598.2px;letter-spacing:0.3px;">10</div>
<svg style="left:630.1px;top:1642.45px;" width="7" height="3.5" viewBox="0 0 7 3.5"><path d="M0 0 L3.5 3.5 L7 0" fill="none" stroke="#777" stroke-width="1.05" stroke-linecap="round" stroke-linejoin="round"/></svg>
<div class="t" style="top:1634.8px;font-size:14.2px;line-height:18px;height:18px;color:#3a3a3a;left:654px;">A</div>
<svg style="left:664.5px;top:1637.5px;" width="5" height="5" viewBox="0 0 5 5"><path d="M2.5 0 V5 M0 2.5 H5" fill="none" stroke="#3c6fcf" stroke-width="1" /></svg>
<div class="t" style="top:1634.8px;font-size:14.2px;line-height:18px;height:18px;color:#3a3a3a;left:679.4px;">A</div>
<svg style="left:687.9px;top:1637.85px;" width="5" height="1.1" viewBox="0 0 5 1.1"><rect width="5" height="1.1" fill="#7b6fd0"/></svg>
<div class="t" style="top:1659.9px;font-size:13.6px;line-height:18px;height:18px;color:#2e2e2e;left:451.2px;width:20px;text-align:center;font-weight:bold;">B</div>
<div class="t" style="top:1659.9px;font-size:13.6px;line-height:18px;height:18px;color:#3a3a3a;left:476.4px;width:20px;text-align:center;font-family:'Liberation Serif',serif;font-style:italic;">I</div>
<div class="t" style="top:1659.4px;font-size:12.4px;line-height:18px;height:18px;color:#3a3a3a;left:502.2px;width:20px;text-align:center;">U</div>
<div class="a" style="left:507.8px;top:1674.2px;width:8.8px;height:1.1px;background:#3a3a3a;"></div>
<div class="t" style="top:1660px;font-size:12.8px;line-height:18px;height:18px;color:#3a3a3a;left:527.7px;width:20px;text-align:center;">A</div>
<div class="a" style="left:531.8px;top:1669.3px;width:11.8px;height:1.1px;background:#3a3a3a;"></div>
<svg style="left:558.4px;top:1663px;" width="11.6" height="11.6" viewBox="0 0 11.6 11.6"><path d="M0.6 0.6 H11 V11 H0.6 Z M5.8 0.6 V11 M0.6 5.8 H11" fill="none" stroke="#3d3d3d" stroke-width="1.15" /></svg>
<svg style="left:576.3px;top:1668.85px;" width="4.2" height="2.1" viewBox="0 0 4.2 2.1"><path d="M0 0 L2.1 2.1 L4.2 0" fill="none" stroke="#2b2b2b" stroke-width="1.35" stroke-linecap="round" stroke-linejoin="round"/></svg>
<svg style="left:594.4px;top:1661.4px;" width="12" height="9.6" viewBox="0 0 12 9.6"><path d="M4.4 2.4 L7 0.5 L11 5.6 L6 9 L2 4.2 Z M2.6 3.2 Q0.2 1.6 2 0.6 Q3.4 0.2 4.6 2.4" fill="none" stroke="#3d3d3d" stroke-width="1.1" /><path d="M10.6 6.6 Q11.8 8 11 9.2 Q10 9.4 9.8 8.2 Z" fill="#333"/></svg>
<div class="a" style="left:593.8px;top:1672.7px;width:13.6px;height:3.2px;background:#f3f02c;border:0.6px solid #d8d420;box-sizing:border-box;border-radius:0.8px;"></div>
<svg style="left:612.6px;top:1668.85px;" width="4.2" height="2.1" viewBox="0 0 4.2 2.1"><path d="M0 0 L2.1 2.1 L4.2 0" fill="none" stroke="#2b2b2b" stroke-width="1.35" stroke-linecap="round" stroke-linejoin="round"/></svg>
<div class="t" style="top:1658.8px;font-size:12.6px;line-height:16px;height:16px;color:#3a3a3a;left:627.1px;width:20px;text-align:center;">A</div>
<div class="a" style="left:629.9px;top:1672.7px;width:14px;height:3.2px;background:#d11a1a;border-radius:1px;"></div>
<svg style="left:649px;top:1668.85px;" width="4.2" height="2.1" viewBox="0 0 4.2 2.1"><path d="M0 0 L2.1 2.1 L4.2 0" fill="none" stroke="#2b2b2b" stroke-width="1.35" stroke-linecap="round" stroke-linejoin="round"/></svg>
<svg style="left:665.6px;top:1662.1px;" width="14" height="13" viewBox="0 0 14 13"><path d="M6.4 0.8 L13 6 L7.4 11 L0.8 6.2 Z M3.8 3.6 L10.4 8.4 M5.4 12.4 H13.2" fill="none" stroke="#3d3d3d" stroke-width="1.1" /></svg>
<svg style="left:685.6px;top:1668.85px;" width="4.2" height="2.1" viewBox="0 0 4.2 2.1"><path d="M0 0 L2.1 2.1 L4.2 0" fill="none" stroke="#2b2b2b" stroke-width="1.35" stroke-linecap="round" stroke-linejoin="round"/></svg>
<svg style="left:696.2px;top:1683.2px;" width="5" height="5" viewBox="0 0 5 5"><path d="M0.4 0.4 L4.4 4.4 M4.6 1.4 V4.6 H1.4" fill="none" stroke="#8c8c8c" stroke-width="0.9" /></svg>
<div class="a" style="left:703.9px;top:1630px;width:1px;height:57.5px;background:#e6e6e6;"></div>
<div class="a" style="left:736.7px;top:1633.3px;width:21.7px;height:20.6px;background:#e8e8e8;border-radius:4px;"></div>
<div class="a" style="left:736.7px;top:1658.9px;width:21.7px;height:20.6px;background:#e8e8e8;border-radius:4px;"></div>
<svg style="left:715.5px;top:1638px;" width="12.4" height="12" viewBox="0 0 12.4 12"><path d="M0.6 2.6 H11.8 M3.4 5.6 H9" fill="none" stroke="#3d3d3d" stroke-width="1.15" /></svg>
<svg style="left:741.2px;top:1638px;" width="12.4" height="12" viewBox="0 0 12.4 12"><path d="M3.4 3.4 H9 M0.6 6.2 H11.8 M3.4 9 H9" fill="none" stroke="#3d3d3d" stroke-width="1.15" /></svg>
<svg style="left:766.7px;top:1638px;" width="12.4" height="12" viewBox="0 0 12.4 12"><path d="M3.4 8.2 H9 M0.6 11 H11.8" fill="none" stroke="#3d3d3d" stroke-width="1.15" /></svg>
<svg style="left:791.7px;top:1638px;" width="12.4" height="12" viewBox="0 0 12.4 12"><path d="M0.4 0.6 H12 M0.4 11.4 H12" fill="none" stroke="#3d3d3d" stroke-width="1.1" /><path d="M0.8 6 H6.4 M3.2 3.6 L0.8 6 L3.2 8.4 M8 6 H9.6 M10.8 6 H12" fill="none" stroke="#4a74d9" stroke-width="1.1" /></svg>
<svg style="left:817.1px;top:1638px;" width="12.4" height="12" viewBox="0 0 12.4 12"><path d="M0.4 0.6 H12 M0.4 11.4 H12" fill="none" stroke="#3d3d3d" stroke-width="1.1" /><path d="M0.4 6 H6 M3.6 3.6 L6 6 L3.6 8.4 M7.8 6 H9.4 M10.6 6 H12" fill="none" stroke="#4a74d9" stroke-width="1.1" /></svg>
<svg style="left:715.5px;top:1663.4px;" width="12.4" height="12" viewBox="0 0 12.4 12"><path d="M0.4 1.4 H12 M0.4 6 H7.4 M0.4 10.6 H12" fill="none" stroke="#3d3d3d" stroke-width="1.15" /></svg>
<svg style="left:741.2px;top:1663.4px;" width="12.4" height="12" viewBox="0 0 12.4 12"><path d="M0.4 1.4 H12 M2.8 6 H9.6 M0.4 10.6 H12" fill="none" stroke="#3d3d3d" stroke-width="1.15" /></svg>
<svg style="left:766.7px;top:1663.4px;" width="12.4" height="12" viewBox="0 0 12.4 12"><path d="M0.4 1.4 H12 M5 6 H12 M0.4 10.6 H12" fill="none" stroke="#3d3d3d" stroke-width="1.15" /></svg>
<svg style="left:791.7px;top:1663.4px;" width="12.4" height="12" viewBox="0 0 12.4 12"><path d="M0.4 1.4 H12 M0.4 6 H12 M0.4 10.6 H12" fill="none" stroke="#3d3d3d" stroke-width="1.15" /></svg>
<svg style="left:816.3px;top:1662.7px;" width="14" height="13.4" viewBox="0 0 14 13.4"><path d="M0.8 0 V13.4 M13.2 0 V13.4 M3.4 8.8 H10.6 M3.4 11.6 H10.6" fill="none" stroke="#3d3d3d" stroke-width="1.1" /><path d="M5.4 1 L3.8 2.8 L5.4 4.6 M8.6 1 L10.2 2.8 L8.6 4.6" fill="none" stroke="#4a74d9" stroke-width="1" /></svg>
<svg style="left:843.2px;top:1637.2px;" width="14.8" height="13.6" viewBox="0 0 14.8 13.6"><path d="M12.8 4 V1.6 Q12.8 0.6 11.8 0.6 H1.6 Q0.6 0.6 0.6 1.6 V12 Q0.6 13 1.6 13 H7.4 M3.2 4 H10.4 M3.2 6.8 H10.4 M3.2 9.6 H7.2" fill="none" stroke="#3d3d3d" stroke-width="1.1" /><path d="M13.8 8 V12.2 H10 M11.4 10.8 L10 12.2 L11.4 13.4" fill="none" stroke="#2f9e74" stroke-width="1" /></svg>
<div class="t" style="top:1636.2px;font-size:10.85px;line-height:16px;height:16px;color:#2b2b2b;left:861.8px;">换行</div>
<svg style="left:843.2px;top:1662.8px;" width="14.8" height="13.2" viewBox="0 0 14.8 13.2"><path d="M0.6 0.6 H14.2 V12.6 H0.6 Z M0.6 4.2 H14.2 M5.2 0.6 V4.2 M9.8 0.6 V4.2" fill="none" stroke="#3d3d3d" stroke-width="1.15" /><path d="M3 8.2 H11.8" fill="none" stroke="#2f9e74" stroke-width="1.2" /></svg>
<div class="t" style="top:1661.6px;font-size:10.85px;line-height:16px;height:16px;color:#2b2b2b;left:861.8px;">合并</div>
<svg style="left:888px;top:1668.85px;" width="4.2" height="2.1" viewBox="0 0 4.2 2.1"><path d="M0 0 L2.1 2.1 L4.2 0" fill="none" stroke="#2b2b2b" stroke-width="1.35" stroke-linecap="round" stroke-linejoin="round"/></svg>
<svg style="left:897.5px;top:1683.2px;" width="5" height="5" viewBox="0 0 5 5"><path d="M0.4 0.4 L4.4 4.4 M4.6 1.4 V4.6 H1.4" fill="none" stroke="#8c8c8c" stroke-width="0.9" /></svg>
<div class="a" style="left:905.2px;top:1630px;width:1px;height:57.5px;background:#e6e6e6;"></div>
<div class="a" style="left:912.8px;top:1633.3px;width:72.6px;height:21px;box-sizing:border-box;border:1px solid #d6d6d6;border-radius:4px;background:#fff;"></div>
<div class="t" style="top:1636px;font-size:10.8px;line-height:16px;height:16px;color:#333;left:922.4px;">常规</div>
<svg style="left:974.3px;top:1642.45px;" width="7" height="3.5" viewBox="0 0 7 3.5"><path d="M0 0 L3.5 3.5 L7 0" fill="none" stroke="#777" stroke-width="1.05" stroke-linecap="round" stroke-linejoin="round"/></svg>
<svg style="left:994.7px;top:1637.7px;" width="14.6" height="12.6" viewBox="0 0 14.6 12.6"><path d="M2.4 3.8 V10 Q2.4 11 3.4 11 H12.2 M12.2 8.8 V2.6 Q12.2 1.6 11.2 1.6 H2.4" fill="none" stroke="#3d3d3d" stroke-width="1.15" /><path d="M0 3.8 L2.4 0.6 L4.8 3.8 Z M14.6 8.8 L12.2 12 L9.8 8.8 Z" fill="#3d3d3d"/></svg>
<div class="t" style="top:1636.2px;font-size:10.85px;line-height:16px;height:16px;color:#2b2b2b;left:1013px;">转换</div>
<svg style="left:1038.9px;top:1643.45px;" width="4.2" height="2.1" viewBox="0 0 4.2 2.1"><path d="M0 0 L2.1 2.1 L4.2 0" fill="none" stroke="#2b2b2b" stroke-width="1.35" stroke-linecap="round" stroke-linejoin="round"/></svg>
<div class="t" style="top:1660.4px;font-size:14.4px;line-height:18px;height:18px;color:#3a3a3a;left:914.3px;width:20px;text-align:center;">¥</div>
<svg style="left:936.6px;top:1668.85px;" width="4.2" height="2.1" viewBox="0 0 4.2 2.1"><path d="M0 0 L2.1 2.1 L4.2 0" fill="none" stroke="#2b2b2b" stroke-width="1.35" stroke-linecap="round" stroke-linejoin="round"/></svg>
<div class="t" style="top:1660.2px;font-size:13.6px;line-height:18px;height:18px;color:#3a3a3a;left:953.7px;width:20px;text-align:center;">%</div>
<div class="t" style="top:1660.8px;font-size:7.6px;line-height:10px;height:10px;color:#3a3a3a;left:973.7px;width:30px;text-align:center;letter-spacing:0.2px;">000</div>
<svg style="left:987.6px;top:1671.9px;" width="2.2" height="3.4" viewBox="0 0 2.2 3.4"><path d="M0.3 0 H1.9 L1.1 3.4 Z" fill="#3a3a3a"/></svg>
<div class="t" style="top:1661px;font-size:7.6px;line-height:10px;height:10px;color:#3a3a3a;left:1007.2px;width:20px;text-align:center;font-weight:bold;">.0</div>
<svg style="left:1007.5px;top:1663.7px;" width="5.6" height="4.6" viewBox="0 0 5.6 4.6"><path d="M5.6 2.3 H0.6 M2.4 0.4 L0.5 2.3 L2.4 4.2" fill="none" stroke="#3a3a3a" stroke-width="0.95" /></svg>
<div class="t" style="top:1668px;font-size:7.6px;line-height:10px;height:10px;color:#3a3a3a;left:1004.6px;width:20px;text-align:center;font-weight:bold;">.00</div>
<div class="t" style="top:1661px;font-size:7.6px;line-height:10px;height:10px;color:#3a3a3a;left:1031px;width:20px;text-align:center;font-weight:bold;">.00</div>
<svg style="left:1033.4px;top:1670.7px;" width="5.6" height="4.6" viewBox="0 0 5.6 4.6"><path d="M0 2.3 H5 M3.2 0.4 L5.1 2.3 L3.2 4.2" fill="none" stroke="#3a3a3a" stroke-width="0.95" /></svg>
<div class="t" style="top:1668px;font-size:7.6px;line-height:10px;height:10px;color:#3a3a3a;left:1033.4px;width:20px;text-align:center;font-weight:bold;">.0</div>
<svg style="left:1049.2px;top:1683.2px;" width="5" height="5" viewBox="0 0 5 5"><path d="M0.4 0.4 L4.4 4.4 M4.6 1.4 V4.6 H1.4" fill="none" stroke="#8c8c8c" stroke-width="0.9" /></svg>
<div class="a" style="left:1057.1px;top:1630px;width:1px;height:57.5px;background:#e6e6e6;"></div>
<svg style="left:1068.9px;top:1636.4px;" width="15.4" height="14.4" viewBox="0 0 15.4 14.4"><path d="M0.6 0.6 H4.6 V4.6 H0.6 Z" fill="none" stroke="#2f9e74" stroke-width="1.05" /><path d="M0.6 6.6 H4.6 V13.8 H0.6 Z M0.6 10.2 H4.6 M7 0.6 H14.8 V4.6 H7 Z M10.9 0.6 V4.6" fill="none" stroke="#3d3d3d" stroke-width="1.05" /></svg>
<div class="t" style="top:1636.2px;font-size:10.85px;line-height:16px;height:16px;color:#2b2b2b;left:1088px;">行和列</div>
<svg style="left:1124.7px;top:1643.45px;" width="4.2" height="2.1" viewBox="0 0 4.2 2.1"><path d="M0 0 L2.1 2.1 L4.2 0" fill="none" stroke="#2b2b2b" stroke-width="1.35" stroke-linecap="round" stroke-linejoin="round"/></svg>
<svg style="left:1068.9px;top:1662.3px;" width="15.4" height="14.6" viewBox="0 0 15.4 14.6"><path d="M0.6 0.6 H14.6 V11.2 H0.6 Z M0.6 4 H14.6 M5 0.6 V11.2" fill="none" stroke="#3d3d3d" stroke-width="1.1" /><path d="M0.6 11.6 H5.4 V14 H0.6 Z" fill="none" stroke="#2f9e74" stroke-width="1" /></svg>
<div class="t" style="top:1661.6px;font-size:10.85px;line-height:16px;height:16px;color:#2b2b2b;left:1088px;">工作表</div>
<svg style="left:1124.7px;top:1668.85px;" width="4.2" height="2.1" viewBox="0 0 4.2 2.1"><path d="M0 0 L2.1 2.1 L4.2 0" fill="none" stroke="#2b2b2b" stroke-width="1.35" stroke-linecap="round" stroke-linejoin="round"/></svg>
<div class="a" style="left:1142.1px;top:1630px;width:1px;height:57.5px;background:#e6e6e6;"></div>
<svg style="left:1171px;top:1637px;" width="18.4" height="16.8" viewBox="0 0 18.4 16.8"><path d="M2 0.6 H16.4 Q17.8 0.6 17.8 2 V14.8 Q17.8 16.2 16.4 16.2 H2 Q0.6 16.2 0.6 14.8 V2 Q0.6 0.6 2 0.6 Z M5 0.6 V16.2 M13.4 0.6 V16.2 M0.6 5.8 H5 M0.6 11 H5 M13.4 5.8 H17.8 M13.4 11 H17.8 M5 8.4 H13.4" fill="none" stroke="#3d3d3d" stroke-width="1.1" /></svg>
<div class="t" style="top:1661.6px;font-size:11.1px;line-height:16px;height:16px;color:#2b2b2b;left:1153.8px;">条件格式</div>
<svg style="left:1200.5px;top:1668.85px;" width="4.2" height="2.1" viewBox="0 0 4.2 2.1"><path d="M0 0 L2.1 2.1 L4.2 0" fill="none" stroke="#2b2b2b" stroke-width="1.35" stroke-linecap="round" stroke-linejoin="round"/></svg>
<svg style="left:1217.3px;top:1636.4px;" width="14.6" height="14.4" viewBox="0 0 14.6 14.4"><path d="M0.6 0.6 H9.6 V6.4 H0.6 Z M0.6 3.5 H9.6 M5.1 0.6 V6.4" fill="none" stroke="#3d3d3d" stroke-width="1.05" /><path d="M13.8 3.4 L7.4 10.6 M12.6 7.4 L8.8 11.6 M6.8 11 Q4.6 11.4 4.8 13.8 Q7.6 14 8.4 12.2" fill="none" stroke="#e27a1f" stroke-width="1.15" /></svg>
<svg style="left:1236px;top:1643.45px;" width="4.2" height="2.1" viewBox="0 0 4.2 2.1"><path d="M0 0 L2.1 2.1 L4.2 0" fill="none" stroke="#2b2b2b" stroke-width="1.35" stroke-linecap="round" stroke-linejoin="round"/></svg>
<svg style="left:1217.2px;top:1661.8px;" width="14.4" height="14.4" viewBox="0 0 14.4 14.4"><path d="M2.8 0 V14.4 M11.6 0 V14.4 M0 2.8 H14.4 M0 11.6 H14.4" fill="none" stroke="#3d3d3d" stroke-width="1.15" /></svg>
<svg style="left:1236px;top:1668.85px;" width="4.2" height="2.1" viewBox="0 0 4.2 2.1"><path d="M0 0 L2.1 2.1 L4.2 0" fill="none" stroke="#2b2b2b" stroke-width="1.35" stroke-linecap="round" stroke-linejoin="round"/></svg>
<div class="a" style="left:1253px;top:1630px;width:1px;height:57.5px;background:#e6e6e6;"></div>
<svg style="left:1265.4px;top:1636.6px;" width="14" height="13.6" viewBox="0 0 14 13.6"><path d="M0.6 3.4 V1.6 Q0.6 0.6 1.6 0.6 H12.4 Q13.4 0.6 13.4 1.6 V12 Q13.4 13 12.4 13 H1.6 Q0.6 13 0.6 12 V3.4 M0.6 3.6 H13.4 M7 5.6 V10.6 M4.6 8.4 L7 10.8 L9.4 8.4" fill="none" stroke="#3d3d3d" stroke-width="1.1" /></svg>
<div class="t" style="top:1636.2px;font-size:10.85px;line-height:16px;height:16px;color:#2b2b2b;left:1284.2px;">填充</div>
<svg style="left:1310.1px;top:1643.45px;" width="4.2" height="2.1" viewBox="0 0 4.2 2.1"><path d="M0 0 L2.1 2.1 L4.2 0" fill="none" stroke="#2b2b2b" stroke-width="1.35" stroke-linecap="round" stroke-linejoin="round"/></svg>
<svg style="left:1266.6px;top:1662.6px;" width="12.4" height="13.6" viewBox="0 0 12.4 13.6"><path d="M11.6 2.6 V0.6 H0.8 L6.6 6.8 L0.8 13 H11.6 V11" fill="none" stroke="#3d3d3d" stroke-width="1.15" stroke-linejoin="round"/></svg>
<div class="t" style="top:1661.6px;font-size:10.85px;line-height:16px;height:16px;color:#2b2b2b;left:1284.2px;">求和</div>
<svg style="left:1310.1px;top:1668.85px;" width="4.2" height="2.1" viewBox="0 0 4.2 2.1"><path d="M0 0 L2.1 2.1 L4.2 0" fill="none" stroke="#2b2b2b" stroke-width="1.35" stroke-linecap="round" stroke-linejoin="round"/></svg>
<svg style="left:1327.8px;top:1636.8px;" width="14" height="13.6" viewBox="0 0 14 13.6"><path d="M0.6 13 L3.4 0.8 H5.4 L8 13 M1.6 9 H7 M2.4 5.2 H6.2 M0.6 13 H8" fill="none" stroke="#3d3d3d" stroke-width="1.05" /><path d="M11.2 0.6 V12.6 M8.8 10 L11.2 12.8 L13.6 10" fill="none" stroke="#4a74d9" stroke-width="1.15" /></svg>
<div class="t" style="top:1636.2px;font-size:10.85px;line-height:16px;height:16px;color:#2b2b2b;left:1345.4px;">排序</div>
<svg style="left:1371.9px;top:1643.45px;" width="4.2" height="2.1" viewBox="0 0 4.2 2.1"><path d="M0 0 L2.1 2.1 L4.2 0" fill="none" stroke="#2b2b2b" stroke-width="1.35" stroke-linecap="round" stroke-linejoin="round"/></svg>
<div class="a" style="left:1322.4px;top:1658.6px;width:59.4px;height:20.8px;box-sizing:border-box;background:#f4f4f4;border:1px solid #e6e6e6;border-radius:4px;"></div>
<div class="a" style="left:1322.4px;top:1658.6px;width:46.4px;height:20.8px;background:#e6e6e6;border-radius:4px 0 0 4px;"></div>
<svg style="left:1328px;top:1663.1px;" width="13.6" height="13" viewBox="0 0 13.6 13"><path d="M0.6 0.6 H13 L8.4 6.4 V12 L5.2 10.4 V6.4 Z" fill="none" stroke="#3d3d3d" stroke-width="1.1" stroke-linejoin="round"/><path d="M3 3.2 H10.4" fill="none" stroke="#3d3d3d" stroke-width="0.9" /></svg>
<div class="t" style="top:1661.6px;font-size:10.85px;line-height:16px;height:16px;color:#2b2b2b;left:1345.4px;">筛选</div>
<svg style="left:1372.5px;top:1668.85px;" width="4.2" height="2.1" viewBox="0 0 4.2 2.1"><path d="M0 0 L2.1 2.1 L4.2 0" fill="none" stroke="#2b2b2b" stroke-width="1.35" stroke-linecap="round" stroke-linejoin="round"/></svg>
<svg style="left:1388.8px;top:1636.8px;" width="14.4" height="13.6" viewBox="0 0 14.4 13.6"><path d="M0.6 1.6 Q0.6 0.6 1.6 0.6 H12.8 Q13.8 0.6 13.8 1.6 V12 Q13.8 13 12.8 13 H1.6 Q0.6 13 0.6 12 Z" fill="none" stroke="#3d3d3d" stroke-width="1.1" /><path d="M5 0.6 V13 M0.6 4.8 H13.8" fill="none" stroke="#3d3d3d" stroke-width="1.1" /><path d="M1.6 7 L4 9.4 M4 7 L1.6 9.4 M1.6 10.4 L4 12.6" fill="none" stroke="#2f9e74" stroke-width="0.9" /></svg>
<div class="t" style="top:1636.2px;font-size:10.85px;line-height:16px;height:16px;color:#2b2b2b;left:1407.2px;">冻结</div>
<svg style="left:1433.5px;top:1643.45px;" width="4.2" height="2.1" viewBox="0 0 4.2 2.1"><path d="M0 0 L2.1 2.1 L4.2 0" fill="none" stroke="#2b2b2b" stroke-width="1.35" stroke-linecap="round" stroke-linejoin="round"/></svg>
<svg style="left:1389.8px;top:1662.8px;" width="13.6" height="13.6" viewBox="0 0 13.6 13.6"><circle cx="5.4" cy="5.4" r="4.7" fill="none" stroke="#3d3d3d" stroke-width="1.15"/><path d="M8.8 8.8 L13 13" fill="none" stroke="#3d3d3d" stroke-width="1.3" /></svg>
<div class="t" style="top:1661.6px;font-size:10.85px;line-height:16px;height:16px;color:#2b2b2b;left:1407.2px;">查找</div>
<svg style="left:1433.5px;top:1668.85px;" width="4.2" height="2.1" viewBox="0 0 4.2 2.1"><path d="M0 0 L2.1 2.1 L4.2 0" fill="none" stroke="#2b2b2b" stroke-width="1.35" stroke-linecap="round" stroke-linejoin="round"/></svg>
<div class="a" style="left:1451.1px;top:1630px;width:1px;height:57.5px;background:#e6e6e6;"></div>
<svg style="left:1492.6px;top:1639.9px;" width="16" height="11" viewBox="0 0 16 11"><path d="M4 10.2 Q0.8 10.2 0.8 7.2 Q0.8 4.6 3.6 4.2 Q4.4 0.8 7.8 0.8 Q10.8 0.8 11.6 3.8" fill="none" stroke="#2f9bd8" stroke-width="1.4" /><path d="M8.2 6 Q9.4 4.4 11.4 4.6 Q14.8 5 14.8 7.6 Q14.8 10.2 12 10.2 H7.4 Q6 9.8 6.4 8.2 Q7 6.8 8.6 7.4" fill="none" stroke="#e0453a" stroke-width="1.4" /></svg>
<svg style="left:1490.2px;top:1637.2px;" width="2.4" height="2.4" viewBox="0 0 2.4 2.4"><path d="M0 0 L2.4 0 L0 2.4 Z" fill="#e0453a"/></svg>
<div class="t" style="top:1661.6px;font-size:10.95px;line-height:16px;height:16px;color:#2b2b2b;left:1462.4px;">保存到天翼云盘</div>
<div class="a" style="left:12px;top:1697.7px;width:145.4px;height:23.5px;background:#fff;border-radius:5px;"></div>
<div class="t" style="top:1701.7px;font-size:11.6px;line-height:16px;height:16px;color:#333;left:45.6px;width:60px;text-align:center;font-family:'Liberation Mono',monospace;">E25</div>
<svg style="left:143.8px;top:1708.4px;" width="6.4" height="3.2" viewBox="0 0 6.4 3.2"><path d="M0 0 L3.2 3.2 L6.4 0" fill="none" stroke="#555" stroke-width="1.1" stroke-linecap="round" stroke-linejoin="round"/></svg>
<div class="a" style="left:166.9px;top:1697.7px;width:1681.6px;height:23.5px;background:#fff;border-radius:5px;"></div>
<svg style="left:188.3px;top:1703px;" width="12.5" height="13" viewBox="0 0 12.5 13"><circle cx="5.4" cy="5.4" r="4.8" fill="none" stroke="#555" stroke-width="1.1"/><path d="M3 5.4 H7.8 M8.9 9 L12 12.2" stroke="#555" stroke-width="1.1" stroke-linecap="round"/></svg>
<div class="t" style="top:1700.5px;font-size:13.5px;line-height:18px;height:18px;color:#444;left:207px;width:30px;text-align:center;font-family:'Liberation Serif',serif;font-style:italic;letter-spacing:0.3px;">fx</div>
<div class="a" style="left:240.1px;top:1702px;width:1px;height:15px;background:#dcdcdc;"></div>
<div class="a" style="left:0px;top:1721.8px;width:1845px;height:26.8px;background:#eeeeee;border-bottom:1px solid #d9d9d9;box-sizing:border-box;"></div>
<div class="a" style="left:0px;top:1748.6px;width:31.8px;height:766.4px;background:#eeeeee;"></div>
<div class="a" style="left:31.8px;top:1748.6px;width:1813.2px;height:766.4px;background:#fff;"></div>
<div class="a" style="left:1845px;top:1748.6px;width:15px;height:766.4px;background:#e9e9e9;"></div>
<svg style="left:0px;top:1748.6px;" width="1845" height="766.4" viewBox="0 0 1845 766.4"><path d="M0 52.53 H1845" stroke="#e8e8e8" stroke-width="1"/><path d="M0 78.66 H1845" stroke="#e8e8e8" stroke-width="1"/><path d="M0 104.79 H1845" stroke="#e8e8e8" stroke-width="1"/><path d="M0 130.92 H1845" stroke="#e8e8e8" stroke-width="1"/><path d="M0 157.05 H1845" stroke="#e8e8e8" stroke-width="1"/><path d="M0 183.18 H1845" stroke="#e8e8e8" stroke-width="1"/><path d="M0 209.31 H1845" stroke="#e8e8e8" stroke-width="1"/><path d="M0 235.44 H1845" stroke="#e8e8e8" stroke-width="1"/><path d="M0 261.57 H1845" stroke="#e8e8e8" stroke-width="1"/><path d="M0 287.7 H1845" stroke="#e8e8e8" stroke-width="1"/><path d="M0 313.83 H1845" stroke="#e8e8e8" stroke-width="1"/><path d="M0 339.96 H1845" stroke="#e8e8e8" stroke-width="1"/><path d="M0 366.09 H1845" stroke="#e8e8e8" stroke-width="1"/><path d="M0 392.22 H1845" stroke="#e8e8e8" stroke-width="1"/><path d="M0 418.35 H1845" stroke="#e8e8e8" stroke-width="1"/><path d="M0 444.48 H1845" stroke="#e8e8e8" stroke-width="1"/><path d="M0 470.61 H1845" stroke="#e8e8e8" stroke-width="1"/><path d="M0 496.74 H1845" stroke="#e8e8e8" stroke-width="1"/><path d="M0 522.87 H1845" stroke="#e8e8e8" stroke-width="1"/><path d="M0 549 H1845" stroke="#e8e8e8" stroke-width="1"/><path d="M0 575.13 H1845" stroke="#e8e8e8" stroke-width="1"/><path d="M0 601.26 H1845" stroke="#e8e8e8" stroke-width="1"/><path d="M0 627.39 H1845" stroke="#e8e8e8" stroke-width="1"/><path d="M0 653.52 H1845" stroke="#e8e8e8" stroke-width="1"/><path d="M0 679.65 H1845" stroke="#e8e8e8" stroke-width="1"/><path d="M0 705.78 H1845" stroke="#e8e8e8" stroke-width="1"/><path d="M0 731.91 H1845" stroke="#e8e8e8" stroke-width="1"/><path d="M0 758.04 H1845" stroke="#e8e8e8" stroke-width="1"/><path d="M96 0 V766.4" stroke="#e8e8e8" stroke-width="1"/><path d="M182 0 V766.4" stroke="#e8e8e8" stroke-width="1"/><path d="M409.5 0 V766.4" stroke="#e8e8e8" stroke-width="1"/><path d="M484.5 0 V766.4" stroke="#e8e8e8" stroke-width="1"/><path d="M522.3 0 V766.4" stroke="#e8e8e8" stroke-width="1"/><path d="M604.8 0 V766.4" stroke="#e8e8e8" stroke-width="1"/><path d="M669.4 0 V766.4" stroke="#e8e8e8" stroke-width="1"/><path d="M734.2 0 V766.4" stroke="#e8e8e8" stroke-width="1"/><path d="M786 0 V766.4" stroke="#e8e8e8" stroke-width="1"/><path d="M837.4 0 V766.4" stroke="#e8e8e8" stroke-width="1"/><path d="M887.2 0 V766.4" stroke="#e8e8e8" stroke-width="1"/><path d="M928.7 0 V766.4" stroke="#e8e8e8" stroke-width="1"/><path d="M993.38 0 V766.4" stroke="#e8e8e8" stroke-width="1"/><path d="M1058.07 0 V766.4" stroke="#e8e8e8" stroke-width="1"/><path d="M1122.76 0 V766.4" stroke="#e8e8e8" stroke-width="1"/><path d="M1187.44 0 V766.4" stroke="#e8e8e8" stroke-width="1"/><path d="M1252.12 0 V766.4" stroke="#e8e8e8" stroke-width="1"/><path d="M1316.81 0 V766.4" stroke="#e8e8e8" stroke-width="1"/><path d="M1381.5 0 V766.4" stroke="#e8e8e8" stroke-width="1"/><path d="M1446.18 0 V766.4" stroke="#e8e8e8" stroke-width="1"/><path d="M1510.87 0 V766.4" stroke="#e8e8e8" stroke-width="1"/><path d="M1575.55 0 V766.4" stroke="#e8e8e8" stroke-width="1"/><path d="M1640.24 0 V766.4" stroke="#e8e8e8" stroke-width="1"/><path d="M1704.92 0 V766.4" stroke="#e8e8e8" stroke-width="1"/><path d="M1769.61 0 V766.4" stroke="#e8e8e8" stroke-width="1"/><path d="M1834.29 0 V766.4" stroke="#e8e8e8" stroke-width="1"/><path d="M31.8 0 V766.4" stroke="#dedede" stroke-width="1"/></svg>
<svg style="left:0px;top:1721.5px;" width="1845" height="27.1" viewBox="0 0 1845 27.1"><path d="M96 5 V27" stroke="#e0e0e0" stroke-width="1"/><path d="M182 5 V27" stroke="#e0e0e0" stroke-width="1"/><path d="M409.5 5 V27" stroke="#e0e0e0" stroke-width="1"/><path d="M484.5 5 V27" stroke="#e0e0e0" stroke-width="1"/><path d="M522.3 5 V27" stroke="#e0e0e0" stroke-width="1"/><path d="M604.8 5 V27" stroke="#e0e0e0" stroke-width="1"/><path d="M669.4 5 V27" stroke="#e0e0e0" stroke-width="1"/><path d="M734.2 5 V27" stroke="#e0e0e0" stroke-width="1"/><path d="M786 5 V27" stroke="#e0e0e0" stroke-width="1"/><path d="M837.4 5 V27" stroke="#e0e0e0" stroke-width="1"/><path d="M887.2 5 V27" stroke="#e0e0e0" stroke-width="1"/><path d="M928.7 5 V27" stroke="#e0e0e0" stroke-width="1"/><path d="M993.38 5 V27" stroke="#e0e0e0" stroke-width="1"/><path d="M1058.07 5 V27" stroke="#e0e0e0" stroke-width="1"/><path d="M1122.76 5 V27" stroke="#e0e0e0" stroke-width="1"/><path d="M1187.44 5 V27" stroke="#e0e0e0" stroke-width="1"/><path d="M1252.12 5 V27" stroke="#e0e0e0" stroke-width="1"/><path d="M1316.81 5 V27" stroke="#e0e0e0" stroke-width="1"/><path d="M1381.5 5 V27" stroke="#e0e0e0" stroke-width="1"/><path d="M1446.18 5 V27" stroke="#e0e0e0" stroke-width="1"/><path d="M1510.87 5 V27" stroke="#e0e0e0" stroke-width="1"/><path d="M1575.55 5 V27" stroke="#e0e0e0" stroke-width="1"/><path d="M1640.24 5 V27" stroke="#e0e0e0" stroke-width="1"/><path d="M1704.92 5 V27" stroke="#e0e0e0" stroke-width="1"/><path d="M1769.61 5 V27" stroke="#e0e0e0" stroke-width="1"/><path d="M1834.29 5 V27" stroke="#e0e0e0" stroke-width="1"/><path d="M31.8 5 V27" stroke="#e0e0e0" stroke-width="1"/></svg>
<div class="a" style="left:484.5px;top:1726.5px;width:37.8px;height:22.1px;background:#dfdfdf;border-bottom:2px solid #1f7a5c;box-sizing:border-box;"></div>
<div class="t" style="top:1728.9px;font-size:13.6px;line-height:18px;height:18px;color:#5c5c5c;left:44.1px;width:40px;text-align:center;">A</div>
<div class="t" style="top:1728.9px;font-size:13.6px;line-height:18px;height:18px;color:#5c5c5c;left:119.2px;width:40px;text-align:center;">B</div>
<div class="t" style="top:1728.9px;font-size:13.6px;line-height:18px;height:18px;color:#5c5c5c;left:275.95px;width:40px;text-align:center;">C</div>
<div class="t" style="top:1728.9px;font-size:13.6px;line-height:18px;height:18px;color:#5c5c5c;left:427.2px;width:40px;text-align:center;">D</div>
<div class="t" style="top:1728.9px;font-size:13.6px;line-height:18px;height:18px;color:#1f7a5c;left:483.6px;width:40px;text-align:center;">E</div>
<div class="t" style="top:1728.9px;font-size:13.6px;line-height:18px;height:18px;color:#5c5c5c;left:543.75px;width:40px;text-align:center;">F</div>
<div class="t" style="top:1728.9px;font-size:13.6px;line-height:18px;height:18px;color:#5c5c5c;left:617.3px;width:40px;text-align:center;">G</div>
<div class="t" style="top:1728.9px;font-size:13.6px;line-height:18px;height:18px;color:#5c5c5c;left:682px;width:40px;text-align:center;">H</div>
<div class="t" style="top:1728.9px;font-size:13.6px;line-height:18px;height:18px;color:#5c5c5c;left:740.3px;width:40px;text-align:center;">I</div>
<div class="t" style="top:1728.9px;font-size:13.6px;line-height:18px;height:18px;color:#5c5c5c;left:791.9px;width:40px;text-align:center;">J</div>
<div class="t" style="top:1728.9px;font-size:13.6px;line-height:18px;height:18px;color:#5c5c5c;left:842.5px;width:40px;text-align:center;">K</div>
<div class="t" style="top:1728.9px;font-size:13.6px;line-height:18px;height:18px;color:#5c5c5c;left:888.15px;width:40px;text-align:center;">L</div>
<div class="t" style="top:1728.9px;font-size:13.6px;line-height:18px;height:18px;color:#5c5c5c;left:941.24px;width:40px;text-align:center;">M</div>
<div class="t" style="top:1728.9px;font-size:13.6px;line-height:18px;height:18px;color:#5c5c5c;left:1005.93px;width:40px;text-align:center;">N</div>
<div class="t" style="top:1728.9px;font-size:13.6px;line-height:18px;height:18px;color:#5c5c5c;left:1070.61px;width:40px;text-align:center;">O</div>
<div class="t" style="top:1728.9px;font-size:13.6px;line-height:18px;height:18px;color:#5c5c5c;left:1135.3px;width:40px;text-align:center;">P</div>
<div class="t" style="top:1728.9px;font-size:13.6px;line-height:18px;height:18px;color:#5c5c5c;left:1199.98px;width:40px;text-align:center;">Q</div>
<div class="t" style="top:1728.9px;font-size:13.6px;line-height:18px;height:18px;color:#5c5c5c;left:1264.67px;width:40px;text-align:center;">R</div>
<div class="t" style="top:1728.9px;font-size:13.6px;line-height:18px;height:18px;color:#5c5c5c;left:1329.35px;width:40px;text-align:center;">S</div>
<div class="t" style="top:1728.9px;font-size:13.6px;line-height:18px;height:18px;color:#5c5c5c;left:1394.04px;width:40px;text-align:center;">T</div>
<div class="t" style="top:1728.9px;font-size:13.6px;line-height:18px;height:18px;color:#5c5c5c;left:1458.72px;width:40px;text-align:center;">U</div>
<div class="t" style="top:1728.9px;font-size:13.6px;line-height:18px;height:18px;color:#5c5c5c;left:1523.41px;width:40px;text-align:center;">V</div>
<div class="t" style="top:1728.9px;font-size:13.6px;line-height:18px;height:18px;color:#5c5c5c;left:1588.09px;width:40px;text-align:center;">W</div>
<div class="t" style="top:1728.9px;font-size:13.6px;line-height:18px;height:18px;color:#5c5c5c;left:1652.78px;width:40px;text-align:center;">X</div>
<div class="t" style="top:1728.9px;font-size:13.6px;line-height:18px;height:18px;color:#5c5c5c;left:1717.46px;width:40px;text-align:center;">Y</div>
<div class="t" style="top:1728.9px;font-size:13.6px;line-height:18px;height:18px;color:#5c5c5c;left:1782.15px;width:40px;text-align:center;">Z</div>
<svg style="left:13.2px;top:1736.2px;" width="6.4" height="6.4" viewBox="0 0 6.4 6.4"><path d="M6.4 0 V6.4 H0 Z" fill="#666"/></svg>
<div class="a" style="left:0px;top:1905.65px;width:31.8px;height:26.13px;background:#dedede;border-right:2px solid #1f7a5c;box-sizing:border-box;"></div>
<div class="t" style="top:1753.2px;font-size:13.4px;line-height:18px;height:18px;color:#5c5c5c;left:0.6px;width:30px;text-align:center;">1</div>
<div class="t" style="top:1779.47px;font-size:13.4px;line-height:18px;height:18px;color:#5c5c5c;left:0.6px;width:30px;text-align:center;letter-spacing:0.4px;">20</div>
<div class="t" style="top:1805.6px;font-size:13.4px;line-height:18px;height:18px;color:#5c5c5c;left:0.6px;width:30px;text-align:center;letter-spacing:0.4px;">21</div>
<div class="t" style="top:1831.73px;font-size:13.4px;line-height:18px;height:18px;color:#5c5c5c;left:0.6px;width:30px;text-align:center;letter-spacing:0.4px;">22</div>
<div class="t" style="top:1857.86px;font-size:13.4px;line-height:18px;height:18px;color:#5c5c5c;left:0.6px;width:30px;text-align:center;letter-spacing:0.4px;">23</div>
<div class="t" style="top:1883.99px;font-size:13.4px;line-height:18px;height:18px;color:#5c5c5c;left:0.6px;width:30px;text-align:center;letter-spacing:0.4px;">24</div>
<div class="t" style="top:1910.12px;font-size:13.4px;line-height:18px;height:18px;color:#1f7a5c;left:0.6px;width:30px;text-align:center;letter-spacing:0.4px;">25</div>
<div class="t" style="top:1936.25px;font-size:13.4px;line-height:18px;height:18px;color:#5c5c5c;left:0.6px;width:30px;text-align:center;letter-spacing:0.4px;">26</div>
<div class="t" style="top:1962.38px;font-size:13.4px;line-height:18px;height:18px;color:#5c5c5c;left:0.6px;width:30px;text-align:center;letter-spacing:0.4px;">27</div>
<div class="t" style="top:1988.51px;font-size:13.4px;line-height:18px;height:18px;color:#5c5c5c;left:0.6px;width:30px;text-align:center;letter-spacing:0.4px;">28</div>
<div class="t" style="top:2014.64px;font-size:13.4px;line-height:18px;height:18px;color:#5c5c5c;left:0.6px;width:30px;text-align:center;letter-spacing:0.4px;">29</div>
<div class="t" style="top:2040.76px;font-size:13.4px;line-height:18px;height:18px;color:#5c5c5c;left:0.6px;width:30px;text-align:center;letter-spacing:0.4px;">30</div>
<div class="t" style="top:2066.89px;font-size:13.4px;line-height:18px;height:18px;color:#5c5c5c;left:0.6px;width:30px;text-align:center;letter-spacing:0.4px;">31</div>
<div class="t" style="top:2093.03px;font-size:13.4px;line-height:18px;height:18px;color:#5c5c5c;left:0.6px;width:30px;text-align:center;letter-spacing:0.4px;">32</div>
<div class="t" style="top:2119.16px;font-size:13.4px;line-height:18px;height:18px;color:#5c5c5c;left:0.6px;width:30px;text-align:center;letter-spacing:0.4px;">33</div>
<div class="t" style="top:2145.29px;font-size:13.4px;line-height:18px;height:18px;color:#5c5c5c;left:0.6px;width:30px;text-align:center;letter-spacing:0.4px;">34</div>
<div class="t" style="top:2171.41px;font-size:13.4px;line-height:18px;height:18px;color:#5c5c5c;left:0.6px;width:30px;text-align:center;letter-spacing:0.4px;">35</div>
<div class="t" style="top:2197.55px;font-size:13.4px;line-height:18px;height:18px;color:#5c5c5c;left:0.6px;width:30px;text-align:center;letter-spacing:0.4px;">36</div>
<div class="t" style="top:2223.68px;font-size:13.4px;line-height:18px;height:18px;color:#5c5c5c;left:0.6px;width:30px;text-align:center;letter-spacing:0.4px;">37</div>
<div class="t" style="top:2249.81px;font-size:13.4px;line-height:18px;height:18px;color:#5c5c5c;left:0.6px;width:30px;text-align:center;letter-spacing:0.4px;">38</div>
<div class="t" style="top:2275.93px;font-size:13.4px;line-height:18px;height:18px;color:#5c5c5c;left:0.6px;width:30px;text-align:center;letter-spacing:0.4px;">39</div>
<div class="t" style="top:2302.07px;font-size:13.4px;line-height:18px;height:18px;color:#5c5c5c;left:0.6px;width:30px;text-align:center;letter-spacing:0.4px;">40</div>
<div class="t" style="top:2328.2px;font-size:13.4px;line-height:18px;height:18px;color:#5c5c5c;left:0.6px;width:30px;text-align:center;letter-spacing:0.4px;">41</div>
<div class="t" style="top:2354.33px;font-size:13.4px;line-height:18px;height:18px;color:#5c5c5c;left:0.6px;width:30px;text-align:center;letter-spacing:0.4px;">42</div>
<div class="t" style="top:2380.45px;font-size:13.4px;line-height:18px;height:18px;color:#5c5c5c;left:0.6px;width:30px;text-align:center;letter-spacing:0.4px;">43</div>
<div class="t" style="top:2406.59px;font-size:13.4px;line-height:18px;height:18px;color:#5c5c5c;left:0.6px;width:30px;text-align:center;letter-spacing:0.4px;">44</div>
<div class="t" style="top:2432.72px;font-size:13.4px;line-height:18px;height:18px;color:#5c5c5c;left:0.6px;width:30px;text-align:center;letter-spacing:0.4px;">45</div>
<div class="t" style="top:2458.85px;font-size:13.4px;line-height:18px;height:18px;color:#5c5c5c;left:0.6px;width:30px;text-align:center;letter-spacing:0.4px;">46</div>
<div class="t" style="top:2484.98px;font-size:13.4px;line-height:18px;height:18px;color:#5c5c5c;left:0.6px;width:30px;text-align:center;letter-spacing:0.4px;">47</div>
<div class="a" style="left:0px;top:1774px;width:1845px;height:2px;background:linear-gradient(to bottom,#d4d4d4,#c2c2c2 50%,#dcdcdc);"></div>
<div class="a" style="left:0px;top:1775.8px;width:1845px;height:2px;background:linear-gradient(to bottom,rgba(0,0,0,.07),rgba(0,0,0,0));"></div>
<div class="a" style="left:95.2px;top:1748.6px;width:1.6px;height:766.4px;background:#1f1f1f;"></div>
<div class="a" style="left:927.8px;top:1748.6px;width:1.6px;height:766.4px;background:#1f1f1f;"></div>
<div class="t" style="top:1753.1px;font-size:12.6px;line-height:18px;height:18px;color:#262626;left:2.9px;width:120px;text-align:center;letter-spacing:0.12px;">123.00</div>
<div class="t" style="top:1753.1px;font-size:12.2px;line-height:18px;height:18px;color:#1f1f1f;left:79px;width:120px;text-align:center;letter-spacing:0.2px;">日期</div>
<div class="t" style="top:1753.1px;font-size:12.2px;line-height:18px;height:18px;color:#1f1f1f;left:235.75px;width:120px;text-align:center;letter-spacing:0.2px;">内容</div>
<div class="t" style="top:1753.1px;font-size:12.2px;line-height:18px;height:18px;color:#1f1f1f;left:387px;width:120px;text-align:center;letter-spacing:0.2px;">金额</div>
<div class="t" style="top:1753.1px;font-size:12.2px;line-height:18px;height:18px;color:#1f1f1f;left:441.9px;width:120px;text-align:center;letter-spacing:0.2px;">成员</div>
<div class="t" style="top:1753.1px;font-size:12.6px;line-height:18px;height:18px;color:#1f1f1f;left:503.55px;width:120px;text-align:center;font-family:'Noto Serif CJK SC','Liberation Serif',serif;font-weight:500;">Ⅲ</div>
<div class="t" style="top:1753.1px;font-size:12.6px;line-height:18px;height:18px;color:#1f1f1f;left:577.1px;width:120px;text-align:center;font-family:'Noto Serif CJK SC','Liberation Serif',serif;font-weight:500;">Ⅱ</div>
<div class="t" style="top:1753.1px;font-size:12.6px;line-height:18px;height:18px;color:#1f1f1f;left:641.8px;width:120px;text-align:center;font-family:'Noto Serif CJK SC','Liberation Serif',serif;font-weight:500;">Ⅰ</div>
<div class="t" style="top:1753.1px;font-size:12.2px;line-height:18px;height:18px;color:#1f1f1f;left:700.1px;width:120px;text-align:center;letter-spacing:0.2px;">年度</div>
<div class="t" style="top:1753.1px;font-size:12.2px;line-height:18px;height:18px;color:#1f1f1f;left:751.7px;width:120px;text-align:center;letter-spacing:0.2px;">月度</div>
<div class="t" style="top:1753.1px;font-size:12.2px;line-height:18px;height:18px;color:#1f1f1f;left:799.8px;width:120px;text-align:center;letter-spacing:0.2px;">对账</div>
<div class="t" style="top:1753.1px;font-size:12.2px;line-height:18px;height:18px;color:#1f1f1f;left:845.45px;width:120px;text-align:center;letter-spacing:0.2px;">预算</div>
<div class="a" style="left:168.4px;top:1761px;width:12.4px;height:13.2px;background:#fff;border:1px solid #d2d2d2;box-sizing:border-box;border-radius:1.5px;"><svg style="left:2.9px;top:4.6px" width="5.2" height="3.3" viewBox="0 0 5.2 3.3"><path d="M0 0 H5.2 L2.6 3.3 Z" fill="#14916b"/></svg></div>
<div class="a" style="left:395.9px;top:1761px;width:12.4px;height:13.2px;background:#fff;border:1px solid #d2d2d2;box-sizing:border-box;border-radius:1.5px;"><svg style="left:2.9px;top:4.6px" width="5.2" height="3.3" viewBox="0 0 5.2 3.3"><path d="M0 0 H5.2 L2.6 3.3 Z" fill="#14916b"/></svg></div>
<div class="a" style="left:470.9px;top:1761px;width:12.4px;height:13.2px;background:#fff;border:1px solid #d2d2d2;box-sizing:border-box;border-radius:1.5px;"><svg style="left:2.9px;top:4.6px" width="5.2" height="3.3" viewBox="0 0 5.2 3.3"><path d="M0 0 H5.2 L2.6 3.3 Z" fill="#14916b"/></svg></div>
<div class="a" style="left:508.7px;top:1761px;width:12.4px;height:13.2px;background:#fff;border:1px solid #d2d2d2;box-sizing:border-box;border-radius:1.5px;"><svg style="left:2.9px;top:4.6px" width="5.2" height="3.3" viewBox="0 0 5.2 3.3"><path d="M0 0 H5.2 L2.6 3.3 Z" fill="#14916b"/></svg></div>
<div class="a" style="left:591.2px;top:1761px;width:12.4px;height:13.2px;background:#fff;border:1px solid #d2d2d2;box-sizing:border-box;border-radius:1.5px;"><svg style="left:2.9px;top:4.6px" width="5.2" height="3.3" viewBox="0 0 5.2 3.3"><path d="M0 0 H5.2 L2.6 3.3 Z" fill="#14916b"/></svg></div>
<div class="a" style="left:655.8px;top:1761px;width:12.4px;height:13.2px;background:#fff;border:1px solid #d2d2d2;box-sizing:border-box;border-radius:1.5px;"><svg style="left:2.9px;top:4.6px" width="5.2" height="3.3" viewBox="0 0 5.2 3.3"><path d="M0 0 H5.2 L2.6 3.3 Z" fill="#14916b"/></svg></div>
<div class="a" style="left:720.6px;top:1761px;width:12.4px;height:13.2px;background:#fff;border:1px solid #d2d2d2;box-sizing:border-box;border-radius:1.5px;"><svg style="left:2.9px;top:4.6px" width="5.2" height="3.3" viewBox="0 0 5.2 3.3"><path d="M0 0 H5.2 L2.6 3.3 Z" fill="#14916b"/></svg></div>
<div class="a" style="left:772.4px;top:1761px;width:12.4px;height:13.2px;background:#fff;border:1px solid #d2d2d2;box-sizing:border-box;border-radius:1.5px;"><svg style="left:2.9px;top:4.6px" width="5.2" height="3.3" viewBox="0 0 5.2 3.3"><path d="M0 0 H5.2 L2.6 3.3 Z" fill="#14916b"/></svg></div>
<div class="a" style="left:823.8px;top:1761px;width:12.4px;height:13.2px;background:#fff;border:1px solid #d2d2d2;box-sizing:border-box;border-radius:1.5px;"><svg style="left:2.9px;top:4.6px" width="5.2" height="3.3" viewBox="0 0 5.2 3.3"><path d="M0 0 H5.2 L2.6 3.3 Z" fill="#14916b"/></svg></div>
<div class="a" style="left:873.6px;top:1761px;width:12.4px;height:13.2px;background:#fff;border:1px solid #d2d2d2;box-sizing:border-box;border-radius:1.5px;"><svg style="left:2.9px;top:4.6px" width="5.2" height="3.3" viewBox="0 0 5.2 3.3"><path d="M0 0 H5.2 L2.6 3.3 Z" fill="#14916b"/></svg></div>
<div class="a" style="left:915.1px;top:1761px;width:12.4px;height:13.2px;background:#fff;border:1px solid #d2d2d2;box-sizing:border-box;border-radius:1.5px;"><svg style="left:2.9px;top:4.6px" width="5.2" height="3.3" viewBox="0 0 5.2 3.3"><path d="M0 0 H5.2 L2.6 3.3 Z" fill="#14916b"/></svg></div>
<div class="t" style="top:1779.37px;font-size:12.6px;line-height:18px;height:18px;color:#262626;left:79px;width:120px;text-align:center;letter-spacing:0.62px;">2017/11/20</div>
<div class="t" style="top:1779.37px;font-size:12.6px;line-height:18px;height:18px;color:#262626;left:235.75px;width:120px;text-align:center;letter-spacing:0.5px;">cloudlet.net</div>
<div class="t" style="top:1779.37px;font-size:12.6px;line-height:18px;height:18px;color:#262626;left:385.8px;width:120px;text-align:center;letter-spacing:0.12px;">2000.00</div>
<div class="t" style="top:1779.37px;font-size:12.2px;line-height:18px;height:18px;color:#1f1f1f;left:503.55px;width:120px;text-align:center;letter-spacing:0.2px;">域名</div>
<div class="t" style="top:1779.37px;font-size:12.2px;line-height:18px;height:18px;color:#1f1f1f;left:577.1px;width:120px;text-align:center;letter-spacing:0.2px;">其他</div>
<div class="t" style="top:1779.37px;font-size:12.2px;line-height:18px;height:18px;color:#1f1f1f;left:641.8px;width:120px;text-align:center;letter-spacing:0.2px;">支出</div>
<div class="t" style="top:1779.37px;font-size:12.6px;line-height:18px;height:18px;color:#262626;left:700.1px;width:120px;text-align:center;letter-spacing:0.12px;">17</div>
<div class="t" style="top:1779.37px;font-size:12.6px;line-height:18px;height:18px;color:#262626;left:751.7px;width:120px;text-align:center;letter-spacing:0.12px;">11</div>
<div class="t" style="top:1805.5px;font-size:12.6px;line-height:18px;height:18px;color:#262626;left:79px;width:120px;text-align:center;letter-spacing:0.62px;">2017/11/20</div>
<div class="t" style="top:1805.5px;font-size:12.6px;line-height:18px;height:18px;color:#262626;left:235.75px;width:120px;text-align:center;letter-spacing:0.5px;">cloudlet.org</div>
<div class="t" style="top:1805.5px;font-size:12.6px;line-height:18px;height:18px;color:#262626;left:385.8px;width:120px;text-align:center;letter-spacing:0.12px;">2000.00</div>
<div class="t" style="top:1805.5px;font-size:12.2px;line-height:18px;height:18px;color:#1f1f1f;left:503.55px;width:120px;text-align:center;letter-spacing:0.2px;">域名</div>
<div class="t" style="top:1805.5px;font-size:12.2px;line-height:18px;height:18px;color:#1f1f1f;left:577.1px;width:120px;text-align:center;letter-spacing:0.2px;">其他</div>
<div class="t" style="top:1805.5px;font-size:12.2px;line-height:18px;height:18px;color:#1f1f1f;left:641.8px;width:120px;text-align:center;letter-spacing:0.2px;">支出</div>
<div class="t" style="top:1805.5px;font-size:12.6px;line-height:18px;height:18px;color:#262626;left:700.1px;width:120px;text-align:center;letter-spacing:0.12px;">17</div>
<div class="t" style="top:1805.5px;font-size:12.6px;line-height:18px;height:18px;color:#262626;left:751.7px;width:120px;text-align:center;letter-spacing:0.12px;">11</div>
<div class="t" style="top:1831.62px;font-size:12.6px;line-height:18px;height:18px;color:#262626;left:79px;width:120px;text-align:center;letter-spacing:0.62px;">2017/11/20</div>
<div class="t" style="top:1831.62px;font-size:12.6px;line-height:18px;height:18px;color:#262626;left:235.75px;width:120px;text-align:center;letter-spacing:0.5px;">cloudlet.cc</div>
<div class="t" style="top:1831.62px;font-size:12.6px;line-height:18px;height:18px;color:#262626;left:385.8px;width:120px;text-align:center;letter-spacing:0.12px;">2000.00</div>
<div class="t" style="top:1831.62px;font-size:12.2px;line-height:18px;height:18px;color:#1f1f1f;left:503.55px;width:120px;text-align:center;letter-spacing:0.2px;">域名</div>
<div class="t" style="top:1831.62px;font-size:12.2px;line-height:18px;height:18px;color:#1f1f1f;left:577.1px;width:120px;text-align:center;letter-spacing:0.2px;">其他</div>
<div class="t" style="top:1831.62px;font-size:12.2px;line-height:18px;height:18px;color:#1f1f1f;left:641.8px;width:120px;text-align:center;letter-spacing:0.2px;">支出</div>
<div class="t" style="top:1831.62px;font-size:12.6px;line-height:18px;height:18px;color:#262626;left:700.1px;width:120px;text-align:center;letter-spacing:0.12px;">17</div>
<div class="t" style="top:1831.62px;font-size:12.6px;line-height:18px;height:18px;color:#262626;left:751.7px;width:120px;text-align:center;letter-spacing:0.12px;">11</div>
<div class="t" style="top:1857.76px;font-size:12.6px;line-height:18px;height:18px;color:#262626;left:385.8px;width:120px;text-align:center;letter-spacing:0.12px;">0.00</div>
<div class="t" style="top:1883.88px;font-size:12.6px;line-height:18px;height:18px;color:#262626;left:385.8px;width:120px;text-align:center;letter-spacing:0.12px;">123.00</div>
<div class="t" style="top:2040.66px;font-size:12.6px;line-height:18px;height:18px;color:#262626;left:79px;width:120px;text-align:center;letter-spacing:0.62px;">2048/1/1</div>
<div class="t" style="top:2040.66px;font-size:12.6px;line-height:18px;height:18px;color:#262626;left:385.8px;width:120px;text-align:center;letter-spacing:0.12px;">0.00</div>
<div class="t" style="top:2040.66px;font-size:12.2px;line-height:18px;height:18px;color:#1f1f1f;left:503.55px;width:120px;text-align:center;letter-spacing:0.2px;">工资</div>
<div class="t" style="top:2040.66px;font-size:12.6px;line-height:18px;height:18px;color:#262626;left:577.1px;width:120px;text-align:center;letter-spacing:0.12px;">/</div>
<div class="t" style="top:2040.66px;font-size:12.2px;line-height:18px;height:18px;color:#1f1f1f;left:641.8px;width:120px;text-align:center;letter-spacing:0.2px;">收入</div>
<div class="t" style="top:2040.66px;font-size:12.6px;line-height:18px;height:18px;color:#262626;left:700.1px;width:120px;text-align:center;letter-spacing:0.12px;">47</div>
<div class="t" style="top:2040.66px;font-size:12.6px;line-height:18px;height:18px;color:#262626;left:751.7px;width:120px;text-align:center;letter-spacing:0.12px;">13</div>
<div class="t" style="top:2040.66px;font-size:12.6px;line-height:18px;height:18px;color:#262626;left:847.95px;width:120px;text-align:center;letter-spacing:0.12px;">P</div>
<div class="t" style="top:2066.8px;font-size:12.6px;line-height:18px;height:18px;color:#262626;left:79px;width:120px;text-align:center;letter-spacing:0.62px;">2048/1/1</div>
<div class="t" style="top:2066.8px;font-size:12.6px;line-height:18px;height:18px;color:#262626;left:385.8px;width:120px;text-align:center;letter-spacing:0.12px;">0.00</div>
<div class="t" style="top:2066.8px;font-size:12.2px;line-height:18px;height:18px;color:#1f1f1f;left:503.55px;width:120px;text-align:center;letter-spacing:0.2px;">现金</div>
<div class="t" style="top:2066.8px;font-size:12.6px;line-height:18px;height:18px;color:#262626;left:577.1px;width:120px;text-align:center;letter-spacing:0.12px;">/</div>
<div class="t" style="top:2066.8px;font-size:12.2px;line-height:18px;height:18px;color:#1f1f1f;left:641.8px;width:120px;text-align:center;letter-spacing:0.2px;">资产</div>
<div class="t" style="top:2066.8px;font-size:12.6px;line-height:18px;height:18px;color:#262626;left:700.1px;width:120px;text-align:center;letter-spacing:0.12px;">47</div>
<div class="t" style="top:2066.8px;font-size:12.6px;line-height:18px;height:18px;color:#262626;left:751.7px;width:120px;text-align:center;letter-spacing:0.12px;">13</div>
<div class="t" style="top:2066.8px;font-size:12.6px;line-height:18px;height:18px;color:#262626;left:847.95px;width:120px;text-align:center;letter-spacing:0.12px;">P</div>
<div class="t" style="top:2092.93px;font-size:12.6px;line-height:18px;height:18px;color:#262626;left:79px;width:120px;text-align:center;letter-spacing:0.62px;">2048/1/2</div>
<div class="t" style="top:2092.93px;font-size:12.6px;line-height:18px;height:18px;color:#262626;left:235.75px;width:120px;text-align:center;letter-spacing:0.5px;">cloudlet.info</div>
<div class="t" style="top:2092.93px;font-size:12.6px;line-height:18px;height:18px;color:#262626;left:385.8px;width:120px;text-align:center;letter-spacing:0.12px;">100000.00</div>
<div class="t" style="top:2092.93px;font-size:12.2px;line-height:18px;height:18px;color:#1f1f1f;left:503.55px;width:120px;text-align:center;letter-spacing:0.2px;">域名</div>
<div class="t" style="top:2092.93px;font-size:12.2px;line-height:18px;height:18px;color:#1f1f1f;left:577.1px;width:120px;text-align:center;letter-spacing:0.2px;">其他</div>
<div class="t" style="top:2092.93px;font-size:12.2px;line-height:18px;height:18px;color:#1f1f1f;left:641.8px;width:120px;text-align:center;letter-spacing:0.2px;">支出</div>
<div class="t" style="top:2092.93px;font-size:12.6px;line-height:18px;height:18px;color:#262626;left:700.1px;width:120px;text-align:center;letter-spacing:0.12px;">47</div>
<div class="t" style="top:2092.93px;font-size:12.6px;line-height:18px;height:18px;color:#262626;left:751.7px;width:120px;text-align:center;letter-spacing:0.12px;">13</div>
<div class="t" style="top:2092.93px;font-size:12.6px;line-height:18px;height:18px;color:#262626;left:847.95px;width:120px;text-align:center;letter-spacing:0.12px;">P</div>
<div class="t" style="top:2119.06px;font-size:12.6px;line-height:18px;height:18px;color:#262626;left:79px;width:120px;text-align:center;letter-spacing:0.62px;">2048/1/2</div>
<div class="t" style="top:2119.06px;font-size:12.6px;line-height:18px;height:18px;color:#262626;left:235.75px;width:120px;text-align:center;letter-spacing:0.5px;">cloudlet.info</div>
<div class="t" style="top:2119.06px;font-size:12.6px;line-height:18px;height:18px;color:#262626;left:385.8px;width:120px;text-align:center;letter-spacing:0.12px;">-100000.00</div>
<div class="t" style="top:2119.06px;font-size:12.2px;line-height:18px;height:18px;color:#1f1f1f;left:503.55px;width:120px;text-align:center;letter-spacing:0.2px;">现金</div>
<div class="t" style="top:2119.06px;font-size:12.6px;line-height:18px;height:18px;color:#262626;left:577.1px;width:120px;text-align:center;letter-spacing:0.12px;">/</div>
<div class="t" style="top:2119.06px;font-size:12.2px;line-height:18px;height:18px;color:#1f1f1f;left:641.8px;width:120px;text-align:center;letter-spacing:0.2px;">资产</div>
<div class="t" style="top:2119.06px;font-size:12.6px;line-height:18px;height:18px;color:#262626;left:700.1px;width:120px;text-align:center;letter-spacing:0.12px;">47</div>
<div class="t" style="top:2119.06px;font-size:12.6px;line-height:18px;height:18px;color:#262626;left:751.7px;width:120px;text-align:center;letter-spacing:0.12px;">13</div>
<div class="t" style="top:2119.06px;font-size:12.6px;line-height:18px;height:18px;color:#262626;left:847.95px;width:120px;text-align:center;letter-spacing:0.12px;">P</div>
<div class="a" style="left:484px;top:1904.85px;width:39.2px;height:27.93px;border:2px solid #217a5b;box-sizing:border-box;"></div>
<div class="a" style="left:520.6px;top:1930.18px;width:3.6px;height:3.6px;background:#217a5b;border:0.6px solid #fff;box-sizing:content-box;"></div>
<svg style="left:1848.2px;top:1754.2px;" width="7" height="1.2" viewBox="0 0 7 1.2"><rect width="7" height="1.2" fill="#9a9a9a"/></svg>
<svg style="left:1849.2px;top:1764.3px;" width="5.6" height="4.6" viewBox="0 0 5.6 4.6"><path d="M0 4.6 L2.8 0 L5.6 4.6 Z" fill="#6e6e6e"/></svg>
<div class="a" style="left:1848.5px;top:1781px;width:7.3px;height:39px;background:#d3d3d3;border-radius:3.6px;"></div>
<svg style="left:1849.2px;top:2502.6px;" width="5.6" height="4.6" viewBox="0 0 5.6 4.6"><path d="M0 0 L2.8 4.6 L5.6 0 Z" fill="#6e6e6e"/></svg>
<div class="a" style="left:0px;top:2515px;width:1860px;height:24px;background:#e3e3e3;"></div>
<svg style="left:13.2px;top:2521.8px;" width="8" height="10" viewBox="0 0 8 10"><path d="M1 0.5 V9.5" stroke="#9a9a9a" stroke-width="1.2"/><path d="M7.2 0.8 L3.2 5 L7.2 9.2" stroke="#9a9a9a" stroke-width="1.2" fill="none"/></svg>
<svg style="left:34.8px;top:2521.8px;" width="5" height="10" viewBox="0 0 5 10"><path d="M4.4 0.8 L0.6 5 L4.4 9.2" stroke="#9a9a9a" stroke-width="1.2" fill="none"/></svg>
<svg style="left:55px;top:2521.8px;" width="5" height="10" viewBox="0 0 5 10"><path d="M0.6 0.8 L4.4 5 L0.6 9.2" stroke="#9a9a9a" stroke-width="1.2" fill="none"/></svg>
<svg style="left:72px;top:2521.8px;" width="8" height="10" viewBox="0 0 8 10"><path d="M7 0.5 V9.5" stroke="#9a9a9a" stroke-width="1.2"/><path d="M0.8 0.8 L4.8 5 L0.8 9.2" stroke="#9a9a9a" stroke-width="1.2" fill="none"/></svg>
<div class="a" style="left:164.2px;top:2515px;width:56.8px;height:22.6px;background:#fff;border-radius:0 0 6px 6px;"></div>
<div class="t" style="top:2517.9px;font-size:11.9px;line-height:18px;height:18px;color:#333;left:82.7px;width:90px;text-align:center;letter-spacing:0px;">Accounts</div>
<div class="t" style="top:2517.9px;font-size:11.6px;line-height:18px;height:18px;color:#1f7a5c;left:147.6px;width:90px;text-align:center;font-weight:bold;letter-spacing:-0.1px;">Ledger</div>
<div class="t" style="top:2517.9px;font-size:11.9px;line-height:18px;height:18px;color:#333;left:207.7px;width:90px;text-align:center;letter-spacing:0px;">Reports</div>
<div class="t" style="top:2517.9px;font-size:11.9px;line-height:18px;height:18px;color:#333;left:272.2px;width:90px;text-align:center;letter-spacing:0px;">Expense</div>
<div class="t" style="top:2517.9px;font-size:11.9px;line-height:18px;height:18px;color:#333;left:335.9px;width:90px;text-align:center;letter-spacing:0px;">Income</div>
<div class="t" style="top:2517.9px;font-size:11.9px;line-height:18px;height:18px;color:#333;left:407px;width:90px;text-align:center;letter-spacing:0px;">AssetsFlow</div>
<div class="t" style="top:2517.9px;font-size:11.9px;line-height:18px;height:18px;color:#333;left:476.8px;width:90px;text-align:center;letter-spacing:0px;">Budget</div>
<div class="t" style="top:2517.9px;font-size:11.9px;line-height:18px;height:18px;color:#333;left:533.7px;width:90px;text-align:center;letter-spacing:0px;">Check</div>
<div class="a" style="left:283.5px;top:2520.5px;width:1px;height:13px;background:#d4d4d4;"></div>
<div class="a" style="left:349.6px;top:2520.5px;width:1px;height:13px;background:#d4d4d4;"></div>
<div class="a" style="left:411.7px;top:2520.5px;width:1px;height:13px;background:#d4d4d4;"></div>
<div class="a" style="left:491.8px;top:2520.5px;width:1px;height:13px;background:#d4d4d4;"></div>
<div class="a" style="left:551.5px;top:2520.5px;width:1px;height:13px;background:#d4d4d4;"></div>
<div class="a" style="left:605.5px;top:2520.5px;width:1px;height:13px;background:#d4d4d4;"></div>
<svg style="left:611.6px;top:2522.4px;" width="9" height="9" viewBox="0 0 9 9"><path d="M4.5 0 V9 M0 4.5 H9" stroke="#333" stroke-width="1.5"/></svg>
<div class="a" style="left:1100.6px;top:2522px;width:1px;height:9px;background:#9a9a9a;"></div>
<svg style="left:1114px;top:2524.2px;" width="4.4" height="5.6" viewBox="0 0 4.4 5.6"><path d="M4.4 0 L0 2.8 L4.4 5.6 Z" fill="#6e6e6e"/></svg>
<div class="a" style="left:1126.5px;top:2523.6px;width:646.5px;height:6.8px;background:#c9c9c9;border-radius:3.4px;"></div>
<svg style="left:1825.4px;top:2524.2px;" width="4.4" height="5.6" viewBox="0 0 4.4 5.6"><path d="M0 0 L4.4 2.8 L0 5.6 Z" fill="#6e6e6e"/></svg>
<div class="a" style="left:1840.6px;top:2522px;width:1px;height:9px;background:#9a9a9a;"></div>
<div class="a" style="left:0px;top:2538.6px;width:1860px;height:21.4px;background:#e3e3e3;border-top:1px solid #dedede;box-sizing:border-box;"></div>
<svg style="left:15.2px;top:2543.5px;" width="12" height="12" viewBox="0 0 12 12"><path d="M1 1 V4.5 H4.5 V1 M4.5 2.7 H7.5 M7.5 1 V4.5 H11 V1 M9.2 4.5 V7 H3 V10.6 H10.5" stroke="#4a4a4a" stroke-width="1.1" fill="none"/></svg>
<svg style="left:45px;top:2543.5px;" width="12" height="12" viewBox="0 0 12 12"><path d="M5 1 H2 Q1 1 1 2 V10 Q1 11 2 11 H5" stroke="#4a4a4a" stroke-width="1.1" fill="none"/><path d="M5.5 3 H11.4 M5.5 6 H11.4 M5.5 9 H11.4" stroke="#4a4a4a" stroke-width="1.1"/></svg>
<svg style="left:1404.5px;top:2543px;" width="14" height="13" viewBox="0 0 14 13"><rect x="0.6" y="0.6" width="11" height="10.6" rx="1" fill="none" stroke="#4a4a4a" stroke-width="1.1"/><path d="M0.6 4 H11.6 M0.6 7.5 H7 M4.2 4 V11.2" stroke="#4a4a4a" stroke-width="1.1"/><circle cx="10.6" cy="10" r="2.6" fill="#e3e3e3" stroke="#4a4a4a" stroke-width="1.1"/></svg>
<svg style="left:1433.3px;top:2545px;" width="14" height="9.2" viewBox="0 0 14 9.2"><path d="M0.6 4.6 Q7 -3 13.4 4.6 Q7 12.2 0.6 4.6 Z" fill="none" stroke="#4a4a4a" stroke-width="1.1"/><circle cx="7" cy="4.6" r="2" fill="none" stroke="#4a4a4a" stroke-width="1.1"/></svg>
<svg style="left:1464.5px;top:2543px;" width="13" height="13" viewBox="0 0 13 13"><rect x="4.2" y="0.6" width="4.6" height="11.8" rx="1" fill="none" stroke="#4a4a4a" stroke-width="1.1"/><rect x="0.6" y="4.2" width="11.8" height="4.6" rx="1" fill="none" stroke="#4a4a4a" stroke-width="1.1"/></svg>
<svg style="left:1481.8px;top:2548.75px;" width="5" height="2.5" viewBox="0 0 5 2.5"><path d="M0 0 L2.5 2.5 L5 0" fill="none" stroke="#444" stroke-width="1.2" stroke-linecap="round" stroke-linejoin="round"/></svg>
<div class="a" style="left:1500px;top:2543.5px;width:1px;height:12px;background:#d0d0d0;"></div>
<div class="a" style="left:1509.2px;top:2540.6px;width:20px;height:18px;background:#d6d6d6;border-radius:3px;"></div>
<svg style="left:1513.2px;top:2543.6px;" width="12" height="12" viewBox="0 0 12 12"><rect x="0.6" y="0.6" width="10.8" height="10.8" rx="1.2" fill="none" stroke="#4a4a4a" stroke-width="1.1"/><path d="M0.6 4 H11.4 M4 4 V11.4" stroke="#4a4a4a" stroke-width="1.1"/></svg>
<svg style="left:1542.4px;top:2543.6px;" width="12" height="12" viewBox="0 0 12 12"><rect x="0.6" y="0.6" width="10.8" height="10.8" rx="1.2" fill="none" stroke="#4a4a4a" stroke-width="1.1"/><path d="M6 0.6 V11.4" stroke="#4a4a4a" stroke-width="1.1"/></svg>
<svg style="left:1571.3px;top:2543.6px;" width="12" height="12" viewBox="0 0 12 12"><rect x="0.6" y="0.6" width="10.8" height="7.4" rx="1.2" fill="none" stroke="#4a4a4a" stroke-width="1.1"/><path d="M0.6 11.2 H11.4 M11.4 9.6 V11.2" stroke="#4a4a4a" stroke-width="1.1"/></svg>
<div class="a" style="left:1596.5px;top:2543.5px;width:1px;height:12px;background:#d0d0d0;"></div>
<div class="t" style="top:2542.2px;font-size:11.4px;line-height:16px;height:16px;color:#333;left:1610.3px;letter-spacing:0.1px;">100%</div>
<svg style="left:1649.2px;top:2549.15px;" width="5" height="2.5" viewBox="0 0 5 2.5"><path d="M0 0 L2.5 2.5 L5 0" fill="none" stroke="#444" stroke-width="1.2" stroke-linecap="round" stroke-linejoin="round"/></svg>
<div class="a" style="left:1671.4px;top:2548px;width:11px;height:1.8px;background:#3a3a3a;"></div>
<div class="a" style="left:1695.4px;top:2547.8px;width:48px;height:2px;background:#5b8ac6;"></div>
<div class="a" style="left:1737.8px;top:2531.4px;width:115.4px;height:30px;background:#fff;border-radius:7px;box-shadow:0 0 3px rgba(0,0,0,.16);"></div>
<svg style="left:1745.2px;top:2537.4px;" width="18" height="14.6" viewBox="0 0 22 16"><path d="M19.5 3.2 C15 0.6 6.5 1.2 6.2 5.2 C6 8 10 8.6 13.6 9 C17.4 9.4 18 11.4 15.4 12.6 C11.4 14.4 5.6 13.8 2 11.6" fill="none" stroke="#ee7a22" stroke-width="3.6" stroke-linecap="round"/></svg>
<div class="a" style="left:1770.2px;top:2536.5px;width:1px;height:16px;background:#e4e4e4;"></div>
<div class="t" style="top:2534.6px;font-size:15.6px;line-height:22px;height:22px;color:#111;left:1771.6px;width:30px;text-align:center;font-weight:500;">中</div>
<svg style="left:1806.6px;top:2538px;" width="15" height="15" viewBox="0 0 17 17"><path d="M9.6 1 A6.6 6.6 0 1 1 1.4 10 A6.2 6.2 0 0 0 9.6 1 Z" fill="none" stroke="#222" stroke-width="1.3" stroke-linejoin="round"/></svg>
<svg style="left:1833.2px;top:2539.4px;" width="12" height="13" viewBox="0 0 12 13"><circle cx="2.8" cy="2.6" r="1.9" fill="none" stroke="#222" stroke-width="1.2"/><path d="M7.4 8 Q9.2 9.4 7.8 12" stroke="#222" stroke-width="2" fill="none" stroke-linecap="round"/></svg>
</div>
</body></html>
